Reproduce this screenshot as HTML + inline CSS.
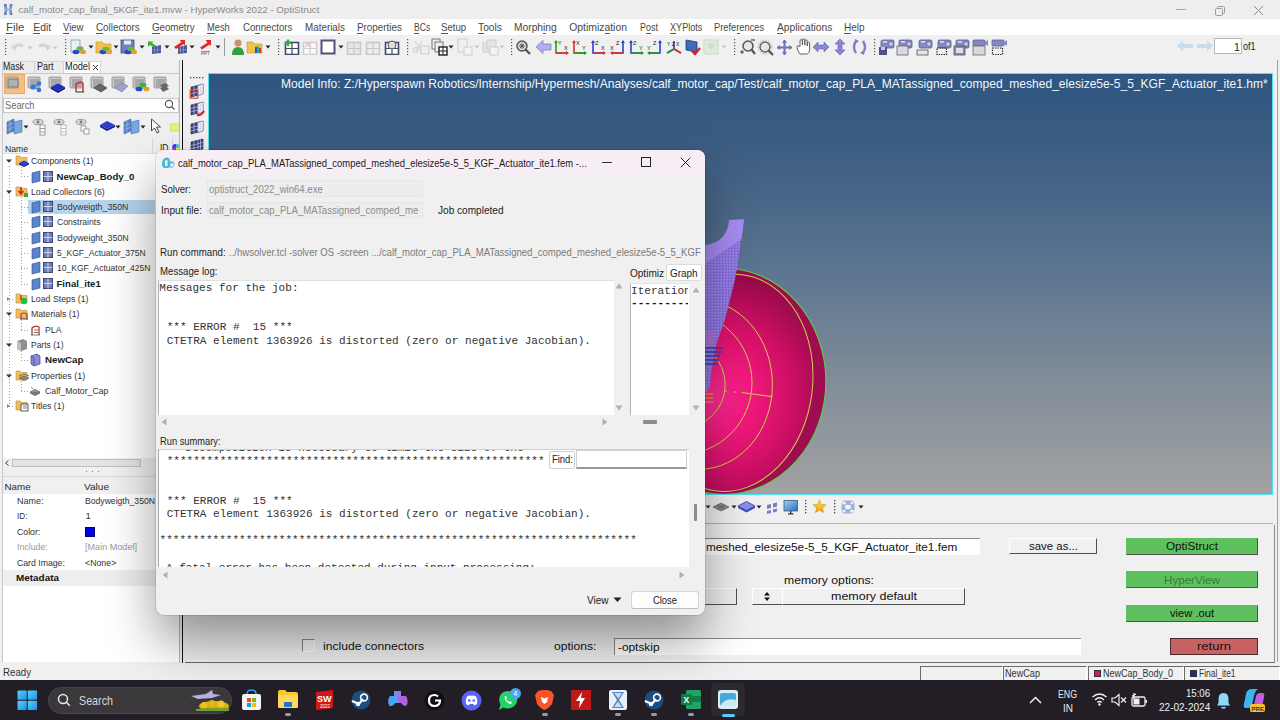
<!DOCTYPE html>
<html><head><meta charset="utf-8"><style>
html,body{margin:0;padding:0;width:1280px;height:720px;overflow:hidden;background:#f0f0f0;}
body>div,body>svg{position:absolute;box-sizing:border-box;}
.t{position:absolute;white-space:pre;line-height:20px;height:20px;}
</style></head><body>
<div style="left:0px;top:0px;width:1280px;height:19px;background:#eeeeee"></div>
<svg style="left:0px;top:0px;" width="16" height="19" viewBox="0 0 16 19"><defs><linearGradient id="hg" x1="0" y1="0" x2="0" y2="1"><stop offset="0" stop-color="#5a76a8"/><stop offset="0.5" stop-color="#8eb0e0"/><stop offset="1" stop-color="#5a76a8"/></linearGradient></defs><path d="M3.8 4 H6.6 Q7.2 9.2 8.2 9.2 Q9.2 9.2 9.8 4 H12.5 Q11.2 9.5 12.5 15 H9.8 Q9.2 9.9 8.2 9.9 Q7.2 9.9 6.6 15 H3.8 Q5.2 9.5 3.8 4 Z" fill="url(#hg)"/></svg>
<div class="t" style="left:18.50px;top:0.25px;font-size:9.68px;font-family:'Liberation Sans',sans-serif;font-weight:normal;color:#8a8a8a;">calf_motor_cap_final_5KGF_ite1.mvw - HyperWorks 2022 - OptiStruct</div>
<div style="left:1176px;top:9px;width:10px;height:1px;background:#a8a8a8"></div>
<svg style="left:1214px;top:5px;" width="12" height="12" viewBox="0 0 12 12"><rect x="1.5" y="3.5" width="7" height="7" rx="1" fill="none" stroke="#9a9a9a"/><path d="M3.5 3.5 V2.5 Q3.5 1.5 4.5 1.5 H9.5 Q10.5 1.5 10.5 2.5 V7.5 Q10.5 8.5 9.5 8.5 H8.5" fill="none" stroke="#9a9a9a"/></svg>
<svg style="left:1253px;top:5px;" width="11" height="11" viewBox="0 0 11 11"><path d="M1 1 L10 10 M10 1 L1 10" stroke="#8a8a8a" stroke-width="1"/></svg>
<div style="left:0px;top:19px;width:1280px;height:16px;background:#ffffff"></div>
<div class="t" style="left:6.20px;top:18.40px;font-size:10.40px;font-family:'Liberation Sans',sans-serif;font-weight:normal;color:#484848;transform:scaleX(1.1039);transform-origin:0 0;">File</div>
<div style="left:6.2px;top:33px;width:7.0px;height:1px;background:#555"></div>
<div class="t" style="left:33.30px;top:18.40px;font-size:10.40px;font-family:'Liberation Sans',sans-serif;font-weight:normal;color:#484848;">Edit</div>
<div style="left:33.3px;top:33px;width:7.0px;height:1px;background:#555"></div>
<div class="t" style="left:62.90px;top:18.40px;font-size:10.40px;font-family:'Liberation Sans',sans-serif;font-weight:normal;color:#484848;transform:scaleX(0.9170);transform-origin:0 0;">View</div>
<div style="left:62.9px;top:33px;width:6.4px;height:1px;background:#555"></div>
<div class="t" style="left:96.20px;top:18.40px;font-size:10.40px;font-family:'Liberation Sans',sans-serif;font-weight:normal;color:#484848;transform:scaleX(0.9473);transform-origin:0 0;">Collectors</div>
<div style="left:96.2px;top:33px;width:7.1px;height:1px;background:#555"></div>
<div class="t" style="left:152.30px;top:18.40px;font-size:10.40px;font-family:'Liberation Sans',sans-serif;font-weight:normal;color:#484848;transform:scaleX(0.9352);transform-origin:0 0;">Geometry</div>
<div style="left:152.3px;top:33px;width:7.6px;height:1px;background:#555"></div>
<div class="t" style="left:207.30px;top:18.40px;font-size:10.40px;font-family:'Liberation Sans',sans-serif;font-weight:normal;color:#484848;transform:scaleX(0.8926);transform-origin:0 0;">Mesh</div>
<div style="left:207.3px;top:33px;width:7.7px;height:1px;background:#555"></div>
<div class="t" style="left:242.70px;top:18.40px;font-size:10.40px;font-family:'Liberation Sans',sans-serif;font-weight:normal;color:#484848;transform:scaleX(0.9270);transform-origin:0 0;">Connectors</div>
<div style="left:255.0px;top:33px;width:5.4px;height:1px;background:#555"></div>
<div class="t" style="left:304.60px;top:18.40px;font-size:10.40px;font-family:'Liberation Sans',sans-serif;font-weight:normal;color:#484848;transform:scaleX(0.9481);transform-origin:0 0;">Materials</div>
<div style="left:337.5px;top:33px;width:2.2px;height:1px;background:#555"></div>
<div class="t" style="left:356.50px;top:18.40px;font-size:10.40px;font-family:'Liberation Sans',sans-serif;font-weight:normal;color:#484848;transform:scaleX(0.9493);transform-origin:0 0;">Properties</div>
<div style="left:356.5px;top:33px;width:6.6px;height:1px;background:#555"></div>
<div class="t" style="left:413.50px;top:18.40px;font-size:10.40px;font-family:'Liberation Sans',sans-serif;font-weight:normal;color:#484848;transform:scaleX(0.8245);transform-origin:0 0;">BCs</div>
<div style="left:413.5px;top:33px;width:5.7px;height:1px;background:#555"></div>
<div class="t" style="left:441.30px;top:18.40px;font-size:10.40px;font-family:'Liberation Sans',sans-serif;font-weight:normal;color:#484848;transform:scaleX(0.9235);transform-origin:0 0;">Setup</div>
<div style="left:441.3px;top:33px;width:6.4px;height:1px;background:#555"></div>
<div class="t" style="left:478.00px;top:18.40px;font-size:10.40px;font-family:'Liberation Sans',sans-serif;font-weight:normal;color:#484848;transform:scaleX(0.9885);transform-origin:0 0;">Tools</div>
<div style="left:478.0px;top:33px;width:6.3px;height:1px;background:#555"></div>
<div class="t" style="left:514.20px;top:18.40px;font-size:10.40px;font-family:'Liberation Sans',sans-serif;font-weight:normal;color:#484848;transform:scaleX(0.9871);transform-origin:0 0;">Morphing</div>
<div style="left:543.3px;top:33px;width:2.3px;height:1px;background:#555"></div>
<div class="t" style="left:569.20px;top:18.40px;font-size:10.40px;font-family:'Liberation Sans',sans-serif;font-weight:normal;color:#484848;">Optimization</div>
<div style="left:604.6px;top:33px;width:5.8px;height:1px;background:#555"></div>
<div class="t" style="left:639.70px;top:18.40px;font-size:10.40px;font-family:'Liberation Sans',sans-serif;font-weight:normal;color:#484848;transform:scaleX(0.8601);transform-origin:0 0;">Post</div>
<div style="left:645.7px;top:33px;width:5.0px;height:1px;background:#555"></div>
<div class="t" style="left:669.60px;top:18.40px;font-size:10.40px;font-family:'Liberation Sans',sans-serif;font-weight:normal;color:#484848;transform:scaleX(0.8758);transform-origin:0 0;">XYPlots</div>
<div style="left:669.6px;top:33px;width:6.1px;height:1px;background:#555"></div>
<div class="t" style="left:714.30px;top:18.40px;font-size:10.40px;font-family:'Liberation Sans',sans-serif;font-weight:normal;color:#484848;transform:scaleX(0.8952);transform-origin:0 0;">Preferences</div>
<div style="left:736.6px;top:33px;width:3.1px;height:1px;background:#555"></div>
<div class="t" style="left:776.50px;top:18.40px;font-size:10.40px;font-family:'Liberation Sans',sans-serif;font-weight:normal;color:#484848;transform:scaleX(0.9897);transform-origin:0 0;">Applications</div>
<div style="left:776.5px;top:33px;width:6.9px;height:1px;background:#555"></div>
<div class="t" style="left:844.20px;top:18.40px;font-size:10.40px;font-family:'Liberation Sans',sans-serif;font-weight:normal;color:#484848;transform:scaleX(0.9677);transform-origin:0 0;">Help</div>
<div style="left:844.2px;top:33px;width:7.3px;height:1px;background:#555"></div>
<svg style="left:3.5px;top:38px;" width="3" height="17" viewBox="0 0 3 17"><rect x="1" y="1" width="1.2" height="1.2" fill="#555"/><rect x="1" y="4" width="1.2" height="1.2" fill="#555"/><rect x="1" y="7" width="1.2" height="1.2" fill="#555"/><rect x="1" y="10" width="1.2" height="1.2" fill="#555"/><rect x="1" y="13" width="1.2" height="1.2" fill="#555"/><rect x="1" y="16" width="1.2" height="1.2" fill="#555"/></svg>
<svg style="left:64px;top:38px;" width="3" height="17" viewBox="0 0 3 17"><rect x="1" y="1" width="1.2" height="1.2" fill="#555"/><rect x="1" y="4" width="1.2" height="1.2" fill="#555"/><rect x="1" y="7" width="1.2" height="1.2" fill="#555"/><rect x="1" y="10" width="1.2" height="1.2" fill="#555"/><rect x="1" y="13" width="1.2" height="1.2" fill="#555"/><rect x="1" y="16" width="1.2" height="1.2" fill="#555"/></svg>
<svg style="left:277px;top:38px;" width="3" height="17" viewBox="0 0 3 17"><rect x="1" y="1" width="1.2" height="1.2" fill="#555"/><rect x="1" y="4" width="1.2" height="1.2" fill="#555"/><rect x="1" y="7" width="1.2" height="1.2" fill="#555"/><rect x="1" y="10" width="1.2" height="1.2" fill="#555"/><rect x="1" y="13" width="1.2" height="1.2" fill="#555"/><rect x="1" y="16" width="1.2" height="1.2" fill="#555"/></svg>
<svg style="left:405.5px;top:38px;" width="3" height="17" viewBox="0 0 3 17"><rect x="1" y="1" width="1.2" height="1.2" fill="#555"/><rect x="1" y="4" width="1.2" height="1.2" fill="#555"/><rect x="1" y="7" width="1.2" height="1.2" fill="#555"/><rect x="1" y="10" width="1.2" height="1.2" fill="#555"/><rect x="1" y="13" width="1.2" height="1.2" fill="#555"/><rect x="1" y="16" width="1.2" height="1.2" fill="#555"/></svg>
<svg style="left:510px;top:38px;" width="3" height="17" viewBox="0 0 3 17"><rect x="1" y="1" width="1.2" height="1.2" fill="#555"/><rect x="1" y="4" width="1.2" height="1.2" fill="#555"/><rect x="1" y="7" width="1.2" height="1.2" fill="#555"/><rect x="1" y="10" width="1.2" height="1.2" fill="#555"/><rect x="1" y="13" width="1.2" height="1.2" fill="#555"/><rect x="1" y="16" width="1.2" height="1.2" fill="#555"/></svg>
<svg style="left:732.5px;top:38px;" width="3" height="17" viewBox="0 0 3 17"><rect x="1" y="1" width="1.2" height="1.2" fill="#555"/><rect x="1" y="4" width="1.2" height="1.2" fill="#555"/><rect x="1" y="7" width="1.2" height="1.2" fill="#555"/><rect x="1" y="10" width="1.2" height="1.2" fill="#555"/><rect x="1" y="13" width="1.2" height="1.2" fill="#555"/><rect x="1" y="16" width="1.2" height="1.2" fill="#555"/></svg>
<svg style="left:872.8px;top:38px;" width="3" height="17" viewBox="0 0 3 17"><rect x="1" y="1" width="1.2" height="1.2" fill="#555"/><rect x="1" y="4" width="1.2" height="1.2" fill="#555"/><rect x="1" y="7" width="1.2" height="1.2" fill="#555"/><rect x="1" y="10" width="1.2" height="1.2" fill="#555"/><rect x="1" y="13" width="1.2" height="1.2" fill="#555"/><rect x="1" y="16" width="1.2" height="1.2" fill="#555"/></svg>
<div style="left:224px;top:38px;width:1px;height:18px;background:#9a9a9a"></div>
<svg style="left:10px;top:40px;" width="16" height="14" viewBox="0 0 16 14"><path d="M3 9 Q6 3 13 6" stroke="#d4d4d4" stroke-width="3" fill="none"/><path d="M1 6 L5 11 L7 5 Z" fill="#d4d4d4"/></svg>
<svg style="left:27px;top:46px;" width="6" height="4" viewBox="0 0 6 4"><path d="M0.5 0.5 H5.5 L3 3.5 Z" fill="#c8c8c8"/></svg>
<svg style="left:36px;top:40px;" width="16" height="14" viewBox="0 0 16 14"><path d="M13 9 Q10 3 3 6" stroke="#d4d4d4" stroke-width="3" fill="none"/><path d="M15 6 L11 11 L9 5 Z" fill="#d4d4d4"/></svg>
<svg style="left:52px;top:46px;" width="6" height="4" viewBox="0 0 6 4"><path d="M0.5 0.5 H5.5 L3 3.5 Z" fill="#c8c8c8"/></svg>
<svg style="left:69px;top:38px;" width="18" height="18" viewBox="0 0 18 18"><rect x="2" y="2" width="9" height="12" fill="#e8eef6" stroke="#8898a8" stroke-width="0.8"/><ellipse cx="7" cy="14" rx="3.5" ry="2.2" fill="#2a48c8"/><ellipse cx="11" cy="10.5" rx="3.5" ry="2.2" fill="#5fb84a"/><ellipse cx="14" cy="14" rx="3" ry="2.2" fill="#e0a030"/></svg>
<svg style="left:88px;top:45px;" width="6" height="4" viewBox="0 0 6 4"><path d="M0.5 0.5 H5.5 L3 3.5 Z" fill="#222"/></svg>
<svg style="left:95px;top:38px;" width="18" height="18" viewBox="0 0 18 18"><path d="M1 4 H7 L9 6 H16 V15 H1 Z" fill="#f0c050" stroke="#c89030" stroke-width="0.6"/><ellipse cx="8" cy="14" rx="3.5" ry="2.2" fill="#2a48c8"/><ellipse cx="11" cy="11" rx="3.5" ry="2.2" fill="#5fb84a"/><ellipse cx="14" cy="14" rx="3" ry="2.2" fill="#e0a030"/></svg>
<svg style="left:113px;top:45px;" width="6" height="4" viewBox="0 0 6 4"><path d="M0.5 0.5 H5.5 L3 3.5 Z" fill="#222"/></svg>
<svg style="left:120px;top:38px;" width="18" height="18" viewBox="0 0 18 18"><rect x="1" y="2" width="13" height="13" fill="#7080b8" stroke="#404880" stroke-width="0.8"/><rect x="4" y="2.5" width="7" height="4" fill="#e8e8f0"/><ellipse cx="8" cy="14" rx="3.5" ry="2.2" fill="#2a48c8"/><ellipse cx="11" cy="11" rx="3.5" ry="2.2" fill="#5fb84a"/><ellipse cx="14" cy="14" rx="3" ry="2.2" fill="#e0a030"/></svg>
<svg style="left:139px;top:45px;" width="6" height="4" viewBox="0 0 6 4"><path d="M0.5 0.5 H5.5 L3 3.5 Z" fill="#222"/></svg>
<svg style="left:145px;top:38px;" width="18" height="18" viewBox="0 0 18 18"><path d="M3 9 L3 3.5 L8.5 3.5 L7 5 L13 9 L11 11 L5 7 L3 9 Z" fill="#40b030" transform="translate(0 0)"/><path d="M7 9 L16 7 L16 15 L7 16 Z" fill="#4858a0"/><path d="M9.5 8.5 V16 M12.5 8 V15.5 M7 12 H16" stroke="#aab" stroke-width="0.6"/></svg>
<svg style="left:164px;top:45px;" width="6" height="4" viewBox="0 0 6 4"><path d="M0.5 0.5 H5.5 L3 3.5 Z" fill="#222"/></svg>
<svg style="left:171px;top:38px;" width="18" height="18" viewBox="0 0 18 18"><path d="M7 9 L16 7 L16 15 L7 16 Z" fill="#4858a0"/><path d="M9.5 8.5 V16 M12.5 8 V15.5 M7 12 H16" stroke="#aab" stroke-width="0.6"/><path d="M14 2 L14 7.5 L12.5 6 L5 11 L3 9 L10.5 4 L8.5 2 Z" fill="#e02828"/></svg>
<svg style="left:189px;top:45px;" width="6" height="4" viewBox="0 0 6 4"><path d="M0.5 0.5 H5.5 L3 3.5 Z" fill="#222"/></svg>
<svg style="left:196px;top:38px;" width="18" height="18" viewBox="0 0 18 18"><path d="M15 2 L15 8 L13.5 6.5 L6 11.5 L4 9.5 L11.5 4.5 L9.5 2 Z" fill="#e02828"/><text x="5" y="16.5" font-size="4.5" fill="#333" font-family="Liberation Sans">PPT</text></svg>
<svg style="left:215px;top:45px;" width="6" height="4" viewBox="0 0 6 4"><path d="M0.5 0.5 H5.5 L3 3.5 Z" fill="#222"/></svg>
<svg style="left:230px;top:38px;" width="16" height="18" viewBox="0 0 16 18"><circle cx="8" cy="5" r="3.5" fill="#d09060"/><path d="M2 17 Q2 9 8 9 Q14 9 14 17 Z" fill="#30a040"/></svg>
<svg style="left:246px;top:38px;" width="18" height="18" viewBox="0 0 18 18"><path d="M1 4 H7 L9 6 H16 V15 H1 Z" fill="#f0c050" stroke="#c89030" stroke-width="0.6"/><rect x="9" y="9" width="2" height="6" fill="#2050e0"/><rect x="11" y="8" width="2" height="7" fill="#30c040"/><rect x="13" y="10" width="2" height="5" fill="#e03030"/></svg>
<svg style="left:265px;top:45px;" width="6" height="4" viewBox="0 0 6 4"><path d="M0.5 0.5 H5.5 L3 3.5 Z" fill="#222"/></svg>
<svg style="left:283.7px;top:39px;" width="16" height="16" viewBox="0 0 16 16"><g opacity="1.0"><rect x="1.5" y="3.5" width="13" height="12" fill="#fff" stroke="#404868" stroke-width="1.6"/><path d="M8 3.5 V15.5 M1.5 9.5 H14.5" stroke="#404868" stroke-width="1.2"/><path d="M4 0.5 V7 M0.8 3.8 H7.2" stroke="#30b030" stroke-width="2.4"/></g></svg>
<svg style="left:302px;top:39px;" width="16" height="16" viewBox="0 0 16 16"><g opacity="0.7"><rect x="1.5" y="3.5" width="13" height="12" fill="#fff" stroke="#c0c0c0" stroke-width="1.6"/><path d="M8 3.5 V15.5 M1.5 9.5 H14.5" stroke="#c0c0c0" stroke-width="1.2"/><path d="M3 3 L9 8 M9 3 L3 8" stroke="#e8b0b0" stroke-width="1.5"/></g></svg>
<svg style="left:320px;top:39px;" width="16" height="16" viewBox="0 0 16 16"><rect x="1.5" y="1.5" width="13" height="13" fill="#fff" stroke="#50507a" stroke-width="2"/></svg>
<svg style="left:338px;top:45px;" width="6" height="4" viewBox="0 0 6 4"><path d="M0.5 0.5 H5.5 L3 3.5 Z" fill="#222"/></svg>
<svg style="left:346px;top:39px;" width="16" height="16" viewBox="0 0 16 16"><g opacity="1.0"><rect x="1.5" y="3.5" width="13" height="12" fill="#e8e8e8" stroke="#c8c8c8" stroke-width="1.6"/><path d="M8 3.5 V15.5 M1.5 9.5 H14.5" stroke="#c8c8c8" stroke-width="1.2"/></g></svg>
<svg style="left:365px;top:39px;" width="16" height="16" viewBox="0 0 16 16"><g opacity="1.0"><rect x="1.5" y="3.5" width="13" height="12" fill="#ececec" stroke="#c8c8c8" stroke-width="1.6"/><path d="M8 3.5 V15.5 M1.5 9.5 H14.5" stroke="#c8c8c8" stroke-width="1.2"/></g></svg>
<svg style="left:384px;top:39px;" width="16" height="16" viewBox="0 0 16 16"><g opacity="1.0"><rect x="1.5" y="3.5" width="13" height="12" fill="#fff" stroke="#404868" stroke-width="1.6"/><path d="M8 3.5 V15.5 M1.5 9.5 H14.5" stroke="#404868" stroke-width="1.2"/><circle cx="8" cy="6" r="4" fill="#ddd" stroke="#555" stroke-width="1"/></g></svg>
<svg style="left:412px;top:39px;" width="18" height="16" viewBox="0 0 18 16"><circle cx="4" cy="11" r="2.5" fill="none" stroke="#ccc"/><path d="M3 2 L10 12 M10 2 L4 12" stroke="#ccc"/><rect x="9" y="7" width="8" height="8" fill="#eee" stroke="#ccc"/></svg>
<svg style="left:431px;top:38px;" width="18" height="18" viewBox="0 0 18 18"><rect x="1" y="1" width="8" height="10" fill="#eee" stroke="#777"/><rect x="4" y="4" width="8" height="10" fill="#eee" stroke="#777"/><rect x="8" y="9" width="8" height="8" fill="#fff" stroke="#222" stroke-width="1.4"/><path d="M12 9 V17 M8 13 H16" stroke="#222"/></svg>
<svg style="left:448px;top:45px;" width="6" height="4" viewBox="0 0 6 4"><path d="M0.5 0.5 H5.5 L3 3.5 Z" fill="#222"/></svg>
<svg style="left:456px;top:38px;" width="18" height="18" viewBox="0 0 18 18"><rect x="2" y="1" width="9" height="13" fill="#f0f0f0" stroke="#ccc"/><rect x="8" y="9" width="8" height="8" fill="#f4f4f4" stroke="#ccc"/></svg>
<svg style="left:473.6px;top:45px;" width="6" height="4" viewBox="0 0 6 4"><path d="M0.5 0.5 H5.5 L3 3.5 Z" fill="#c8c8c8"/></svg>
<svg style="left:482px;top:38px;" width="18" height="18" viewBox="0 0 18 18"><rect x="1" y="5" width="9" height="9" fill="#e4e4e4" stroke="#ccc"/><rect x="5" y="2" width="9" height="9" fill="#e4e4e4" stroke="#ccc"/><rect x="8" y="9" width="8" height="8" fill="#f4f4f4" stroke="#ccc"/></svg>
<svg style="left:499px;top:45px;" width="6" height="4" viewBox="0 0 6 4"><path d="M0.5 0.5 H5.5 L3 3.5 Z" fill="#c8c8c8"/></svg>
<svg style="left:515px;top:39px;" width="16" height="16" viewBox="0 0 16 16"><circle cx="7" cy="7" r="5" fill="#d8d8e0" stroke="#555" stroke-width="1.5"/><path d="M10.5 10.5 L15 15" stroke="#555" stroke-width="2.4"/><path d="M5 5 L9 9 M9 5 L5 9 M7 4 V10 M4 7 H10" stroke="#444" stroke-width="0.8"/></svg>
<svg style="left:535px;top:39px;" width="18" height="16" viewBox="0 0 18 16"><path d="M1 8 L8 1.5 V5 H16 V11 H8 V14.5 Z" fill="#b0b0ec" stroke="#8080c8" stroke-width="0.8"/></svg>
<svg style="left:553px;top:39px;" width="18" height="17" viewBox="0 0 18 17"><path d="M3 2 V14 H15" stroke="#20a020" stroke-width="1.6" fill="none"/><path d="M3 14 H15" stroke="#e03030" stroke-width="1.6"/><path d="M1 4 L3 1 L5 4 Z" fill="#20a020"/><path d="M13 12 L16 14 L13 16 Z" fill="#e03030"/><text x="5" y="6" font-size="5.5" font-family="Liberation Sans" fill="#222">Y</text><text x="11" y="11" font-size="5.5" font-family="Liberation Sans" fill="#222">X</text></svg>
<svg style="left:571px;top:39px;" width="18" height="17" viewBox="0 0 18 17"><path d="M3 2 V14 H15" stroke="#e03030" stroke-width="1.6" fill="none"/><path d="M3 14 H15" stroke="#20a020" stroke-width="1.6"/><path d="M1 4 L3 1 L5 4 Z" fill="#e03030"/><path d="M13 12 L16 14 L13 16 Z" fill="#20a020"/><text x="5" y="6" font-size="5.5" font-family="Liberation Sans" fill="#222">X</text><text x="11" y="11" font-size="5.5" font-family="Liberation Sans" fill="#222">Y</text></svg>
<svg style="left:590px;top:39px;" width="18" height="17" viewBox="0 0 18 17"><path d="M3 2 V14 H15" stroke="#3040d0" stroke-width="1.6" fill="none"/><path d="M3 14 H15" stroke="#e03030" stroke-width="1.6"/><path d="M1 4 L3 1 L5 4 Z" fill="#3040d0"/><path d="M13 12 L16 14 L13 16 Z" fill="#e03030"/><text x="5" y="6" font-size="5.5" font-family="Liberation Sans" fill="#222">Z</text><text x="11" y="11" font-size="5.5" font-family="Liberation Sans" fill="#222">X</text></svg>
<svg style="left:609px;top:39px;" width="18" height="17" viewBox="0 0 18 17"><path d="M14 2 V14 H2" stroke="#3040d0" stroke-width="1.6" fill="none"/><path d="M2 14 H14" stroke="#e03030" stroke-width="1.6"/><path d="M12 4 L14 1 L16 4 Z" fill="#3040d0"/><path d="M4 12 L1 14 L4 16 Z" fill="#e03030"/><text x="7" y="6" font-size="5.5" font-family="Liberation Sans" fill="#222">Z</text><text x="1" y="11" font-size="5.5" font-family="Liberation Sans" fill="#222">X</text></svg>
<svg style="left:627.6px;top:39px;" width="18" height="17" viewBox="0 0 18 17"><path d="M3 2 V14 H15" stroke="#3040d0" stroke-width="1.6" fill="none"/><path d="M3 14 H15" stroke="#20a020" stroke-width="1.6"/><path d="M1 4 L3 1 L5 4 Z" fill="#3040d0"/><path d="M13 12 L16 14 L13 16 Z" fill="#20a020"/><text x="5" y="6" font-size="5.5" font-family="Liberation Sans" fill="#222">Z</text><text x="11" y="11" font-size="5.5" font-family="Liberation Sans" fill="#222">Y</text></svg>
<svg style="left:646px;top:39px;" width="18" height="17" viewBox="0 0 18 17"><path d="M14 2 V14 H2" stroke="#3040d0" stroke-width="1.6" fill="none"/><path d="M2 14 H14" stroke="#20a020" stroke-width="1.6"/><path d="M12 4 L14 1 L16 4 Z" fill="#3040d0"/><path d="M4 12 L1 14 L4 16 Z" fill="#20a020"/><text x="7" y="6" font-size="5.5" font-family="Liberation Sans" fill="#222">Z</text><text x="1" y="11" font-size="5.5" font-family="Liberation Sans" fill="#222">Y</text></svg>
<svg style="left:665px;top:39px;" width="18" height="17" viewBox="0 0 18 17"><path d="M9 2 V10 M9 10 L2 14 M9 10 L16 14" stroke="#3040d0" stroke-width="1.6"/><path d="M9 10 L16 14" stroke="#e03030" stroke-width="1.6"/><path d="M9 10 L2 14" stroke="#20a020" stroke-width="1.6"/><text x="2" y="7" font-size="5" fill="#222" font-family="Liberation Sans">Y Z X</text></svg>
<svg style="left:684px;top:38px;" width="17" height="18" viewBox="0 0 17 18"><path d="M2 2 L13 4 V14 L2 12 Z" fill="#3e6cc0" stroke="#203870" stroke-width="0.8"/><path d="M8 13 L11 16 L16 10" stroke="#e02020" stroke-width="2.2" fill="none"/></svg>
<svg style="left:703px;top:38px;opacity:0.8" width="16" height="18" viewBox="0 0 16 18"><rect x="1" y="2" width="14" height="14" fill="#dde8dd" stroke="#c8d0c8"/><circle cx="8" cy="8" r="3" fill="#c8d8c8"/></svg>
<svg style="left:721px;top:45px;" width="6" height="4" viewBox="0 0 6 4"><path d="M0.5 0.5 H5.5 L3 3.5 Z" fill="#c8c8c8"/></svg>
<svg style="left:739px;top:39px;" width="18" height="17" viewBox="0 0 18 17"><circle cx="9" cy="7" r="5" fill="#e4e4ec" stroke="#555" stroke-width="1.5"/><path d="M12.5 10.5 L16 15" stroke="#555" stroke-width="2.2"/><path d="M12 1 H16" stroke="#444" stroke-width="1.2"/><path d="M1 13 H5 M3 11 V15" stroke="#444" stroke-width="1"/></svg>
<svg style="left:757px;top:39px;" width="18" height="17" viewBox="0 0 18 17"><circle cx="8" cy="8" r="5" fill="#e4e4ec" stroke="#666" stroke-width="1.5"/><circle cx="8" cy="8" r="7" fill="none" stroke="#999" stroke-width="0.8" stroke-dasharray="1.5 1.5"/><path d="M11.5 11.5 L16 16" stroke="#555" stroke-width="2.2"/></svg>
<svg style="left:776px;top:39px;" width="17" height="17" viewBox="0 0 17 17"><path d="M8.5 1 V16 M1 8.5 H16" stroke="#7070b0" stroke-width="2"/><path d="M8.5 1 L6 4 H11 Z M8.5 16 L6 13 H11 Z M1 8.5 L4 6 V11 Z M16 8.5 L13 6 V11 Z" fill="#7070b0"/></svg>
<svg style="left:795px;top:38px;" width="17" height="18" viewBox="0 0 17 18"><path d="M5 16 Q2 12 2 9 Q2 7 4 8 L5 9 V3 Q5 1.5 6.2 1.5 Q7.4 1.5 7.4 3 V7 V2 Q7.4 0.8 8.6 0.8 Q9.8 0.8 9.8 2 V7 V3 Q9.8 1.8 11 1.8 Q12.2 1.8 12.2 3 V8 V5 Q12.2 4 13.4 4 Q14.6 4 14.6 5 V11 Q14.6 16 11 16 Z" fill="#fff" stroke="#555" stroke-width="0.9"/></svg>
<svg style="left:812px;top:40px;" width="18" height="14" viewBox="0 0 18 14"><path d="M1 7 L6 2 V5 H12 V2 L17 7 L12 12 V9 H6 V12 Z" fill="#8888d0" stroke="#6060b0" stroke-width="0.6"/></svg>
<svg style="left:833px;top:38px;" width="14" height="18" viewBox="0 0 14 18"><path d="M7 1 L12 6 H9 V12 H12 L7 17 L2 12 H5 V6 H2 Z" fill="#8888d0" stroke="#6060b0" stroke-width="0.6"/></svg>
<svg style="left:851px;top:38px;" width="17" height="18" viewBox="0 0 17 18"><path d="M5 3 Q1 9 5 15" stroke="#8080c8" stroke-width="2.4" fill="none"/><path d="M12 3 Q16 9 12 15" stroke="#8080c8" stroke-width="2.4" fill="none"/><path d="M4 1 L8 3 L4 6 Z M13 12 L9 15 L13 17 Z" fill="#8080c8"/></svg>
<svg style="left:878px;top:38px;" width="18" height="18" viewBox="0 0 18 18"><rect x="3" y="2" width="13" height="8" rx="1.5" fill="#8888c0" stroke="#5a5a98" stroke-width="0.8"/><circle cx="13" cy="6" r="2.3" fill="#ccd" stroke="#55a" stroke-width="0.6"/><rect x="5" y="3" width="4" height="1.6" fill="#dde"/><rect x="1" y="9" width="8" height="8" fill="#50508a"/><rect x="3" y="9" width="4" height="3" fill="#ccd"/></svg>
<svg style="left:896px;top:38px;" width="18" height="18" viewBox="0 0 18 18"><rect x="3" y="2" width="13" height="8" rx="1.5" fill="#8888c0" stroke="#5a5a98" stroke-width="0.8"/><circle cx="13" cy="6" r="2.3" fill="#ccd" stroke="#55a" stroke-width="0.6"/><rect x="5" y="3" width="4" height="1.6" fill="#dde"/><rect x="1" y="8" width="11" height="9" fill="#d8d8e0" stroke="#666" stroke-width="0.8"/></svg>
<svg style="left:915.6px;top:38px;" width="18" height="18" viewBox="0 0 18 18"><rect x="3" y="2" width="13" height="8" rx="1.5" fill="#8888c0" stroke="#5a5a98" stroke-width="0.8"/><circle cx="13" cy="6" r="2.3" fill="#ccd" stroke="#55a" stroke-width="0.6"/><rect x="5" y="3" width="4" height="1.6" fill="#dde"/><rect x="1" y="12" width="11" height="5" fill="#e4e4e8" stroke="#555" stroke-width="0.8"/></svg>
<svg style="left:935px;top:38px;" width="18" height="18" viewBox="0 0 18 18"><rect x="3" y="2" width="13" height="8" rx="1.5" fill="#8888c0" stroke="#5a5a98" stroke-width="0.8"/><circle cx="13" cy="6" r="2.3" fill="#ccd" stroke="#55a" stroke-width="0.6"/><rect x="5" y="3" width="4" height="1.6" fill="#dde"/><rect x="2" y="10" width="9.5" height="6.5" fill="none" stroke="#111" stroke-width="1.2" stroke-dasharray="1.3 1.2"/></svg>
<svg style="left:953px;top:38px;" width="18" height="18" viewBox="0 0 18 18"><rect x="3" y="2" width="13" height="8" rx="1.5" fill="#8888c0" stroke="#5a5a98" stroke-width="0.8"/><circle cx="13" cy="6" r="2.3" fill="#ccd" stroke="#55a" stroke-width="0.6"/><rect x="5" y="3" width="4" height="1.6" fill="#dde"/><rect x="1" y="8" width="11" height="9" fill="#8a8aa8" stroke="#555" stroke-width="0.8"/><rect x="3" y="10" width="7" height="5" fill="#dde"/></svg>
<svg style="left:971px;top:38px;" width="18" height="18" viewBox="0 0 18 18"><rect x="2" y="2" width="12" height="6" rx="1" fill="#8888c0" stroke="#5a5a98" stroke-width="0.8"/><path d="M14 4 L17 2 V8 L14 6 Z" fill="#8888c0"/><rect x="2" y="8" width="12" height="9" fill="#d8d8e0" stroke="#666" stroke-width="0.8"/></svg>
<svg style="left:990px;top:38px;" width="18" height="18" viewBox="0 0 18 18"><rect x="2" y="2" width="12" height="6" rx="1" fill="#8888c0" stroke="#5a5a98" stroke-width="0.8"/><path d="M14 4 L17 2 V8 L14 6 Z" fill="#8888c0"/><rect x="2.5" y="10" width="10" height="6.5" fill="none" stroke="#111" stroke-width="1.2" stroke-dasharray="1.3 1.2"/></svg>
<svg style="left:1176px;top:39px;" width="18" height="14" viewBox="0 0 18 14"><path d="M1 7 L7 1.5 V5 H17 V9 H7 V12.5 Z" fill="#c8dcec"/></svg>
<svg style="left:1196px;top:39px;" width="18" height="14" viewBox="0 0 18 14"><path d="M17 7 L11 1.5 V5 H1 V9 H11 V12.5 Z" fill="#c8dcec"/></svg>
<div style="left:1214px;top:38px;width:28px;height:16px;background:#fff;border:1px solid #b8b8b8"></div>
<div class="t" style="left:1234.00px;top:36.86px;font-size:10.50px;font-family:'Liberation Sans',sans-serif;font-weight:normal;color:#222;">1</div>
<div class="t" style="left:1243.00px;top:37.03px;font-size:10.00px;font-family:'Liberation Sans',sans-serif;font-weight:normal;color:#222;transform:scaleX(0.8992);transform-origin:0 0;">of1</div>
<div style="left:1277px;top:60px;width:1px;height:602px;background:#a0a0a0"></div>
<div class="t" style="left:2.50px;top:663.03px;font-size:10.00px;font-family:'Liberation Sans',sans-serif;font-weight:normal;color:#333;transform:scaleX(0.9686);transform-origin:0 0;">Ready</div>
<div style="left:920px;top:666px;width:83px;height:14px;border-top:1px solid #6a6a6a;border-left:1px solid #6a6a6a;border-right:1px solid #ffffff;background:#f0f0f0"></div>
<div style="left:1003px;top:666px;width:84px;height:14px;border-top:1px solid #6a6a6a;border-left:1px solid #6a6a6a;border-right:1px solid #ffffff;background:#f0f0f0"></div>
<div class="t" style="left:1005.00px;top:663.53px;font-size:10.00px;font-family:'Liberation Sans',sans-serif;font-weight:normal;color:#333;transform:scaleX(0.9126);transform-origin:0 0;">NewCap</div>
<div style="left:1088px;top:666px;width:96px;height:14px;border-top:1px solid #6a6a6a;border-left:1px solid #6a6a6a;border-right:1px solid #ffffff;background:#f0f0f0"></div>
<div style="left:1094px;top:670px;width:7px;height:7px;background:#e0107a;border:1px solid #333"></div>
<div class="t" style="left:1102.50px;top:663.53px;font-size:10.00px;font-family:'Liberation Sans',sans-serif;font-weight:normal;color:#333;transform:scaleX(0.8994);transform-origin:0 0;">NewCap_Body_0</div>
<div style="left:1184px;top:666px;width:96px;height:14px;border-top:1px solid #6a6a6a;border-left:1px solid #6a6a6a;border-right:1px solid #ffffff;background:#f0f0f0"></div>
<div style="left:1190px;top:670px;width:7px;height:7px;background:#1a2e80;border:1px solid #333"></div>
<div class="t" style="left:1198.50px;top:663.53px;font-size:10.00px;font-family:'Liberation Sans',sans-serif;font-weight:normal;color:#333;transform:scaleX(0.8418);transform-origin:0 0;">Final_ite1</div>
<div style="left:2px;top:61px;width:33px;height:12px;background:#ececec;border:1px solid #d4d4d4;border-bottom:none"></div>
<div style="left:35px;top:61px;width:29px;height:12px;background:#ececec;border:1px solid #d4d4d4;border-bottom:none;border-left:none"></div>
<div style="left:64px;top:61px;width:37px;height:13px;background:#ffffff;border:1px solid #d4d4d4;border-bottom:none;border-left:none"></div>
<div class="t" style="left:3.00px;top:56.97px;font-size:10.20px;font-family:'Liberation Sans',sans-serif;font-weight:normal;color:#222;transform:scaleX(0.8617);transform-origin:0 0;">Mask</div>
<div class="t" style="left:37.00px;top:56.97px;font-size:10.20px;font-family:'Liberation Sans',sans-serif;font-weight:normal;color:#222;transform:scaleX(0.8820);transform-origin:0 0;">Part</div>
<div class="t" style="left:65.00px;top:56.97px;font-size:10.20px;font-family:'Liberation Sans',sans-serif;font-weight:normal;color:#222;transform:scaleX(0.8999);transform-origin:0 0;">Model</div>
<svg style="left:92px;top:64px;" width="7" height="7" viewBox="0 0 7 7"><path d="M1 1 L6 6 M6 1 L1 6" stroke="#333" stroke-width="1"/></svg>
<div style="left:2px;top:73px;width:178px;height:589px;background:#f0f0f0;border:1px solid #c8c8c8"></div>
<div style="left:3.5px;top:74px;width:21px;height:20px;background:#f7be80;border:1px solid #f0a860"></div>
<svg style="left:4px;top:74px;" width="20" height="20" viewBox="0 0 20 20"><rect x="2" y="3" width="12" height="11" rx="1" fill="#c8c8c8" stroke="#8a8a8a" stroke-width="0.8"/><rect x="4" y="5" width="9" height="8" fill="#a8a8a8"/><rect x="4" y="5" width="10" height="8" fill="#b0b0b0" stroke="#555" stroke-width="0.6"/></svg>
<svg style="left:26px;top:74px;" width="20" height="20" viewBox="0 0 20 20"><rect x="2" y="3" width="12" height="11" rx="1" fill="#c8c8c8" stroke="#8a8a8a" stroke-width="0.8"/><rect x="4" y="5" width="9" height="8" fill="#a8a8a8"/><circle cx="7" cy="13" r="2.6" fill="#2f7ad8"/><circle cx="13" cy="9.5" r="2.3" fill="#2f7ad8"/><circle cx="13" cy="16" r="2.3" fill="#2f7ad8"/><path d="M7 13 L13 9.5 M7 13 L13 16" stroke="#2f7ad8"/></svg>
<svg style="left:47px;top:74px;" width="20" height="20" viewBox="0 0 20 20"><rect x="2" y="3" width="12" height="11" rx="1" fill="#c8c8c8" stroke="#8a8a8a" stroke-width="0.8"/><rect x="4" y="5" width="9" height="8" fill="#a8a8a8"/><path d="M4 13 L11 9.5 L18 13 L11 17 Z" fill="#2030c0"/><path d="M4 13 V15 L11 19 L18 15 V13 L11 17 Z" fill="#101880"/></svg>
<svg style="left:68px;top:74px;" width="20" height="20" viewBox="0 0 20 20"><rect x="2" y="3" width="12" height="11" rx="1" fill="#c8c8c8" stroke="#8a8a8a" stroke-width="0.8"/><rect x="4" y="5" width="9" height="8" fill="#a8a8a8"/><path d="M8 18 V10 Q12 7 15 9 V18" stroke="#c03030" stroke-width="1.4" fill="none"/><path d="M8 18 H16" stroke="#333"/></svg>
<svg style="left:89px;top:74px;" width="20" height="20" viewBox="0 0 20 20"><rect x="2" y="3" width="12" height="11" rx="1" fill="#c8c8c8" stroke="#8a8a8a" stroke-width="0.8"/><rect x="4" y="5" width="9" height="8" fill="#a8a8a8"/><path d="M5 14 L11 10 L18 14 L12 18 Z" fill="#666" stroke="#333" stroke-width="0.6"/></svg>
<svg style="left:110px;top:74px;" width="20" height="20" viewBox="0 0 20 20"><rect x="2" y="3" width="12" height="11" rx="1" fill="#c8c8c8" stroke="#8a8a8a" stroke-width="0.8"/><rect x="4" y="5" width="9" height="8" fill="#a8a8a8"/><path d="M5 14 L12 9 L18 12 L12 18 Z" fill="#a0a0d8" stroke="#7070b0" stroke-width="0.6"/></svg>
<svg style="left:131px;top:74px;" width="20" height="20" viewBox="0 0 20 20"><rect x="2" y="3" width="12" height="11" rx="1" fill="#c8c8c8" stroke="#8a8a8a" stroke-width="0.8"/><rect x="4" y="5" width="9" height="8" fill="#a8a8a8"/><ellipse cx="8" cy="15" rx="3.5" ry="2.3" fill="#2a48c8"/><ellipse cx="12" cy="11" rx="3.5" ry="2.3" fill="#38b838"/><ellipse cx="15.5" cy="15" rx="3" ry="2.3" fill="#e0a030"/></svg>
<svg style="left:152px;top:74px;" width="20" height="20" viewBox="0 0 20 20"><rect x="2" y="3" width="12" height="11" rx="1" fill="#c8c8c8" stroke="#8a8a8a" stroke-width="0.8"/><rect x="4" y="5" width="9" height="8" fill="#a8a8a8"/><path d="M8 11 L14 9 L17 12 L11 14 Z M8 14 L14 12 L17 15 L11 18 Z" fill="#666"/></svg>
<div style="left:2.5px;top:97.5px;width:176px;height:15.5px;background:#ffffff;border:1px solid #c8c8c8"></div>
<div class="t" style="left:5.00px;top:96.23px;font-size:10.30px;font-family:'Liberation Sans',sans-serif;font-weight:normal;color:#6a6a6a;transform:scaleX(0.9039);transform-origin:0 0;">Search</div>
<svg style="left:164px;top:99px;" width="12" height="12" viewBox="0 0 12 12"><circle cx="5" cy="5" r="3.6" fill="none" stroke="#555" stroke-width="1.1"/><path d="M7.6 7.6 L10.5 10.5" stroke="#555" stroke-width="1.3"/></svg>
<svg style="left:5px;top:118px;" width="20" height="18" viewBox="0 0 20 18"><path d="M2 4 L9 1 V13 L2 16 Z" fill="#5a84cc" stroke="#33589a" stroke-width="0.5"/><path d="M9 4 L17 2 V14 L9 16 Z" fill="#7aa6e0" stroke="#33589a" stroke-width="0.5"/><path d="M2 8 L9 5 M2 12 L9 9 M5 2.5 V14.5" stroke="#bcd" stroke-width="0.5"/></svg>
<svg style="left:22.5px;top:125px;" width="6" height="4" viewBox="0 0 6 4"><path d="M0.5 0.5 H5.5 L3 3.5 Z" fill="#222"/></svg>
<svg style="left:32px;top:118px;" width="18" height="18" viewBox="0 0 18 18"><ellipse cx="6" cy="4" rx="5" ry="2.6" fill="#d8d8d8" stroke="#888" stroke-width="0.8"/><circle cx="6" cy="4" r="1.4" fill="#777"/><rect x="8" y="7" width="5" height="10" fill="#fff" stroke="#888" stroke-width="0.8"/><path d="M8 10.5 H13 M8 14 H13" stroke="#888" stroke-width="0.8"/></svg>
<svg style="left:53px;top:118px;" width="18" height="18" viewBox="0 0 18 18"><ellipse cx="6" cy="4" rx="5" ry="2.6" fill="#d8d8d8" stroke="#888" stroke-width="0.8"/><circle cx="6" cy="4" r="1.4" fill="#777"/><rect x="8" y="7" width="5" height="10" fill="#fff" stroke="#aaa" stroke-width="0.8"/><path d="M8 10.5 H13 M8 14 H13" stroke="#aaa" stroke-width="0.8"/></svg>
<svg style="left:75px;top:118px;" width="18" height="18" viewBox="0 0 18 18"><ellipse cx="6" cy="4" rx="5" ry="2.6" fill="#d8d8d8" stroke="#888" stroke-width="0.8"/><circle cx="6" cy="4" r="1.4" fill="#777"/><rect x="6" y="8" width="5" height="5" fill="#fff" stroke="#888" stroke-width="0.8"/><rect x="9" y="11" width="5" height="5" fill="#fff" stroke="#888" stroke-width="0.8"/></svg>
<svg style="left:99px;top:119px;" width="18" height="14" viewBox="0 0 18 14"><path d="M1 6 L8 2 L16 6 L8 10 Z" fill="#2a40d0"/><path d="M1 6 V8 L8 12 L16 8 V6 L8 10 Z" fill="#101c90"/></svg>
<svg style="left:115px;top:125px;" width="6" height="4" viewBox="0 0 6 4"><path d="M0.5 0.5 H5.5 L3 3.5 Z" fill="#222"/></svg>
<svg style="left:122px;top:118px;" width="20" height="18" viewBox="0 0 20 18"><path d="M2 4 L9 1 V13 L2 16 Z" fill="#5a84cc" stroke="#33589a" stroke-width="0.5"/><path d="M9 4 L17 2 V14 L9 16 Z" fill="#7aa6e0" stroke="#33589a" stroke-width="0.5"/><path d="M2 8 L9 5 M2 12 L9 9 M5 2.5 V14.5" stroke="#bcd" stroke-width="0.5"/></svg>
<svg style="left:139.5px;top:125px;" width="6" height="4" viewBox="0 0 6 4"><path d="M0.5 0.5 H5.5 L3 3.5 Z" fill="#222"/></svg>
<svg style="left:150px;top:118px;" width="12" height="16" viewBox="0 0 12 16"><path d="M1.5 1 V13 L4.5 10 L7 15 L9 14 L6.5 9 H10.5 Z" fill="#fff" stroke="#333" stroke-width="0.9"/></svg>
<svg style="left:170px;top:120px;" width="9" height="14" viewBox="0 0 9 14"><rect x="0" y="4" width="9" height="7" fill="#e8f080" stroke="#c8d050" stroke-width="0.6"/></svg>
<div style="left:3px;top:138px;width:176px;height:16px;background:#f0f0f0;border-bottom:1px solid #e0e0e0"></div>
<div style="left:152px;top:138px;width:1px;height:16px;background:#d8d8d8"></div>
<div style="left:172px;top:138px;width:1px;height:16px;background:#d8d8d8"></div>
<div class="t" style="left:4.50px;top:138.90px;font-size:9.80px;font-family:'Liberation Sans',sans-serif;font-weight:normal;color:#2a2a2a;transform:scaleX(0.8798);transform-origin:0 0;">Name</div>
<div class="t" style="left:159.50px;top:138.70px;font-size:10.40px;font-family:'Liberation Sans',sans-serif;font-weight:normal;color:#222;transform:scaleX(0.8173);transform-origin:0 0;">ID</div>
<svg style="left:171px;top:142px;" width="9" height="11" viewBox="0 0 9 11"><circle cx="4.8" cy="5.5" r="3.4" fill="#ff2020"/><path d="M4.8 5.5 L4.8 2 A3.5 3.5 0 0 1 8.3 5.5 Z" fill="#20d0ff"/><path d="M4.8 5.5 L8.3 5.5 A3.5 3.5 0 0 1 4.8 9 Z" fill="#ffe020"/><path d="M4.8 5.5 L4.8 9 A3.5 3.5 0 0 1 1.3 5.5 Z" fill="#b020ff"/><path d="M4.8 5.5 L1.3 5.5 A3.5 3.5 0 0 1 4.8 2 Z" fill="#2040ff"/></svg>
<div style="left:3px;top:154px;width:176px;height:304px;background:#ffffff"></div>
<svg style="left:9px;top:166px;" width="1" height="240" viewBox="0 0 1 240"><line x1="0.5" y1="0" x2="0.5" y2="240" stroke="#a0a0a0" stroke-width="1" stroke-dasharray="1 2"/></svg>
<svg style="left:9px;top:299px;" width="6" height="1" viewBox="0 0 6 1"><line x1="0" y1="0.5" x2="6" y2="0.5" stroke="#a0a0a0" stroke-width="1" stroke-dasharray="1 2"/></svg>
<svg style="left:9px;top:406px;" width="6" height="1" viewBox="0 0 6 1"><line x1="0" y1="0.5" x2="6" y2="0.5" stroke="#a0a0a0" stroke-width="1" stroke-dasharray="1 2"/></svg>
<svg style="left:21px;top:167px;" width="1" height="9" viewBox="0 0 1 9"><line x1="0.5" y1="0" x2="0.5" y2="9" stroke="#a0a0a0" stroke-width="1" stroke-dasharray="1 2"/></svg>
<svg style="left:21px;top:176px;" width="9" height="1" viewBox="0 0 9 1"><line x1="0" y1="0.5" x2="9" y2="0.5" stroke="#a0a0a0" stroke-width="1" stroke-dasharray="1 2"/></svg>
<svg style="left:21px;top:197px;" width="1" height="87" viewBox="0 0 1 87"><line x1="0.5" y1="0" x2="0.5" y2="87" stroke="#a0a0a0" stroke-width="1" stroke-dasharray="1 2"/></svg>
<svg style="left:21px;top:207px;" width="9" height="1" viewBox="0 0 9 1"><line x1="0" y1="0.5" x2="9" y2="0.5" stroke="#a0a0a0" stroke-width="1" stroke-dasharray="1 2"/></svg>
<svg style="left:21px;top:222px;" width="9" height="1" viewBox="0 0 9 1"><line x1="0" y1="0.5" x2="9" y2="0.5" stroke="#a0a0a0" stroke-width="1" stroke-dasharray="1 2"/></svg>
<svg style="left:21px;top:238px;" width="9" height="1" viewBox="0 0 9 1"><line x1="0" y1="0.5" x2="9" y2="0.5" stroke="#a0a0a0" stroke-width="1" stroke-dasharray="1 2"/></svg>
<svg style="left:21px;top:253px;" width="9" height="1" viewBox="0 0 9 1"><line x1="0" y1="0.5" x2="9" y2="0.5" stroke="#a0a0a0" stroke-width="1" stroke-dasharray="1 2"/></svg>
<svg style="left:21px;top:268px;" width="9" height="1" viewBox="0 0 9 1"><line x1="0" y1="0.5" x2="9" y2="0.5" stroke="#a0a0a0" stroke-width="1" stroke-dasharray="1 2"/></svg>
<svg style="left:21px;top:284px;" width="9" height="1" viewBox="0 0 9 1"><line x1="0" y1="0.5" x2="9" y2="0.5" stroke="#a0a0a0" stroke-width="1" stroke-dasharray="1 2"/></svg>
<svg style="left:21px;top:330px;" width="7" height="1" viewBox="0 0 7 1"><line x1="0" y1="0.5" x2="7" y2="0.5" stroke="#a0a0a0" stroke-width="1" stroke-dasharray="1 2"/></svg>
<svg style="left:21px;top:320px;" width="1" height="10" viewBox="0 0 1 10"><line x1="0.5" y1="0" x2="0.5" y2="10" stroke="#a0a0a0" stroke-width="1" stroke-dasharray="1 2"/></svg>
<svg style="left:21px;top:360px;" width="7" height="1" viewBox="0 0 7 1"><line x1="0" y1="0.5" x2="7" y2="0.5" stroke="#a0a0a0" stroke-width="1" stroke-dasharray="1 2"/></svg>
<svg style="left:21px;top:351px;" width="1" height="9" viewBox="0 0 1 9"><line x1="0.5" y1="0" x2="0.5" y2="9" stroke="#a0a0a0" stroke-width="1" stroke-dasharray="1 2"/></svg>
<svg style="left:21px;top:391px;" width="7" height="1" viewBox="0 0 7 1"><line x1="0" y1="0.5" x2="7" y2="0.5" stroke="#a0a0a0" stroke-width="1" stroke-dasharray="1 2"/></svg>
<svg style="left:21px;top:381px;" width="1" height="10" viewBox="0 0 1 10"><line x1="0.5" y1="0" x2="0.5" y2="10" stroke="#a0a0a0" stroke-width="1" stroke-dasharray="1 2"/></svg>
<div style="left:28px;top:200px;width:127px;height:14px;background:#b6d4ec"></div>
<svg style="left:5px;top:157.8px;" width="8" height="6" viewBox="0 0 8 6"><path d="M1 1.5 H7 L4 4.8 Z" fill="#333"/></svg>
<svg style="left:15px;top:152.8px;" width="15" height="15" viewBox="0 0 15 15"><path d="M1 3 H5 L6.5 4.5 H12 V12 H1 Z" fill="#f0c060" stroke="#c08830" stroke-width="0.6"/><path d="M4 10 L9 7.5 L14 10 L9 12.5 Z" fill="#2a40d0"/><path d="M4 10 V11.5 L9 14 L14 11.5 V10 L9 12.5 Z" fill="#101c90"/></svg>
<div class="t" style="left:30.80px;top:150.87px;font-size:9.60px;font-family:'Liberation Sans',sans-serif;font-weight:normal;color:#333333;transform:scaleX(0.9080);transform-origin:0 0;">Components (1)</div>
<svg style="left:31px;top:169.5px;" width="10" height="14" viewBox="0 0 10 14"><path d="M1 3 L9 1 V11 L1 13 Z" fill="#5a84d0" stroke="#2a4a90" stroke-width="0.6"/></svg>
<svg style="left:42px;top:169.5px;" width="12" height="14" viewBox="0 0 12 14"><rect x="1.5" y="1.5" width="9" height="10" fill="#7080b8" stroke="#303868" stroke-width="0.9"/><path d="M6 1.5 V11.5 M1.5 6.5 H10.5" stroke="#dde" stroke-width="0.9"/></svg>
<div class="t" style="left:56.50px;top:166.57px;font-size:9.60px;font-family:'Liberation Sans',sans-serif;font-weight:bold;color:#1a1a1a;">NewCap_Body_0</div>
<svg style="left:5px;top:188.8px;" width="8" height="6" viewBox="0 0 8 6"><path d="M1 1.5 H7 L4 4.8 Z" fill="#333"/></svg>
<svg style="left:15px;top:183.8px;" width="15" height="15" viewBox="0 0 15 15"><path d="M1 3 H5 L6.5 4.5 H12 V12 H1 Z" fill="#f0c060" stroke="#c08830" stroke-width="0.6"/><path d="M6 3 V9 M3.5 7 L6 10 L8.5 7" stroke="#e02020" stroke-width="1.6" fill="none"/><rect x="9" y="9" width="4" height="4" fill="#30b030"/></svg>
<div class="t" style="left:30.80px;top:181.87px;font-size:9.60px;font-family:'Liberation Sans',sans-serif;font-weight:normal;color:#333333;transform:scaleX(0.9099);transform-origin:0 0;">Load Collectors (6)</div>
<svg style="left:31px;top:199.8px;" width="10" height="14" viewBox="0 0 10 14"><path d="M1 3 L9 1 V11 L1 13 Z" fill="#5a84d0" stroke="#2a4a90" stroke-width="0.6"/></svg>
<svg style="left:42px;top:199.8px;" width="12" height="14" viewBox="0 0 12 14"><rect x="1.5" y="1.5" width="9" height="10" fill="#7080b8" stroke="#303868" stroke-width="0.9"/><path d="M6 1.5 V11.5 M1.5 6.5 H10.5" stroke="#dde" stroke-width="0.9"/></svg>
<div class="t" style="left:56.50px;top:196.87px;font-size:9.60px;font-family:'Liberation Sans',sans-serif;font-weight:normal;color:#333333;transform:scaleX(0.9176);transform-origin:0 0;">Bodyweigth_350N</div>
<svg style="left:31px;top:215.3px;" width="10" height="14" viewBox="0 0 10 14"><path d="M1 3 L9 1 V11 L1 13 Z" fill="#5a84d0" stroke="#2a4a90" stroke-width="0.6"/></svg>
<svg style="left:42px;top:215.3px;" width="12" height="14" viewBox="0 0 12 14"><rect x="1.5" y="1.5" width="9" height="10" fill="#7080b8" stroke="#303868" stroke-width="0.9"/><path d="M6 1.5 V11.5 M1.5 6.5 H10.5" stroke="#dde" stroke-width="0.9"/></svg>
<div class="t" style="left:56.50px;top:212.37px;font-size:9.60px;font-family:'Liberation Sans',sans-serif;font-weight:normal;color:#333333;transform:scaleX(0.8959);transform-origin:0 0;">Constraints</div>
<svg style="left:31px;top:230.5px;" width="10" height="14" viewBox="0 0 10 14"><path d="M1 3 L9 1 V11 L1 13 Z" fill="#5a84d0" stroke="#2a4a90" stroke-width="0.6"/></svg>
<svg style="left:42px;top:230.5px;" width="12" height="14" viewBox="0 0 12 14"><rect x="1.5" y="1.5" width="9" height="10" fill="#7080b8" stroke="#303868" stroke-width="0.9"/><path d="M6 1.5 V11.5 M1.5 6.5 H10.5" stroke="#dde" stroke-width="0.9"/></svg>
<div class="t" style="left:56.50px;top:227.57px;font-size:9.60px;font-family:'Liberation Sans',sans-serif;font-weight:normal;color:#333333;transform:scaleX(0.9214);transform-origin:0 0;">Bodyweight_350N</div>
<svg style="left:31px;top:246px;" width="10" height="14" viewBox="0 0 10 14"><path d="M1 3 L9 1 V11 L1 13 Z" fill="#5a84d0" stroke="#2a4a90" stroke-width="0.6"/></svg>
<svg style="left:42px;top:246px;" width="12" height="14" viewBox="0 0 12 14"><rect x="1.5" y="1.5" width="9" height="10" fill="#7080b8" stroke="#303868" stroke-width="0.9"/><path d="M6 1.5 V11.5 M1.5 6.5 H10.5" stroke="#dde" stroke-width="0.9"/></svg>
<div class="t" style="left:56.50px;top:243.07px;font-size:9.60px;font-family:'Liberation Sans',sans-serif;font-weight:normal;color:#333333;transform:scaleX(0.8898);transform-origin:0 0;">5_KGF_Actuator_375N</div>
<svg style="left:31px;top:261.2px;" width="10" height="14" viewBox="0 0 10 14"><path d="M1 3 L9 1 V11 L1 13 Z" fill="#5a84d0" stroke="#2a4a90" stroke-width="0.6"/></svg>
<svg style="left:42px;top:261.2px;" width="12" height="14" viewBox="0 0 12 14"><rect x="1.5" y="1.5" width="9" height="10" fill="#7080b8" stroke="#303868" stroke-width="0.9"/><path d="M6 1.5 V11.5 M1.5 6.5 H10.5" stroke="#dde" stroke-width="0.9"/></svg>
<div class="t" style="left:56.50px;top:258.27px;font-size:9.60px;font-family:'Liberation Sans',sans-serif;font-weight:normal;color:#333333;transform:scaleX(0.8893);transform-origin:0 0;">10_KGF_Actuator_425N</div>
<svg style="left:31px;top:276.5px;" width="10" height="14" viewBox="0 0 10 14"><path d="M1 3 L9 1 V11 L1 13 Z" fill="#5a84d0" stroke="#2a4a90" stroke-width="0.6"/></svg>
<svg style="left:42px;top:276.5px;" width="12" height="14" viewBox="0 0 12 14"><rect x="1.5" y="1.5" width="9" height="10" fill="#7080b8" stroke="#303868" stroke-width="0.9"/><path d="M6 1.5 V11.5 M1.5 6.5 H10.5" stroke="#dde" stroke-width="0.9"/></svg>
<div class="t" style="left:56.50px;top:273.57px;font-size:9.60px;font-family:'Liberation Sans',sans-serif;font-weight:bold;color:#1a1a1a;">Final_ite1</div>
<svg style="left:5px;top:296px;" width="8" height="6" viewBox="0 0 8 6"><path d="M2 1 V5 L5 3 Z" fill="#888"/></svg>
<svg style="left:15px;top:291px;" width="15" height="15" viewBox="0 0 15 15"><path d="M1 3 H5 L6.5 4.5 H12 V12 H1 Z" fill="#f0c060" stroke="#c08830" stroke-width="0.6"/><circle cx="9" cy="10" r="3.2" fill="#20c040"/><path d="M6 4 V9" stroke="#e02020" stroke-width="1.4"/></svg>
<div class="t" style="left:30.80px;top:289.07px;font-size:9.60px;font-family:'Liberation Sans',sans-serif;font-weight:normal;color:#333333;transform:scaleX(0.9131);transform-origin:0 0;">Load Steps (1)</div>
<svg style="left:5px;top:311.3px;" width="8" height="6" viewBox="0 0 8 6"><path d="M1 1.5 H7 L4 4.8 Z" fill="#333"/></svg>
<svg style="left:15px;top:306.3px;" width="15" height="15" viewBox="0 0 15 15"><path d="M1 3 H5 L6.5 4.5 H12 V12 H1 Z" fill="#f0c060" stroke="#c08830" stroke-width="0.6"/><path d="M6 13 V8 Q9 6 12 8 V13" stroke="#c03030" stroke-width="1.2" fill="none"/><path d="M5 13 H13" stroke="#444"/></svg>
<div class="t" style="left:30.80px;top:304.37px;font-size:9.60px;font-family:'Liberation Sans',sans-serif;font-weight:normal;color:#333333;transform:scaleX(0.9092);transform-origin:0 0;">Materials (1)</div>
<svg style="left:29px;top:322.6px;" width="12" height="14" viewBox="0 0 12 14"><path d="M3 12 V5 Q6 2 10 4 V12" stroke="#c03030" stroke-width="1.3" fill="none"/><path d="M2 12 H11 M5 7 H9 M5 9.5 H9" stroke="#555" stroke-width="0.8"/></svg>
<div class="t" style="left:45.40px;top:319.67px;font-size:9.60px;font-family:'Liberation Sans',sans-serif;font-weight:normal;color:#333333;transform:scaleX(0.9093);transform-origin:0 0;">PLA</div>
<svg style="left:5px;top:342px;" width="8" height="6" viewBox="0 0 8 6"><path d="M1 1.5 H7 L4 4.8 Z" fill="#333"/></svg>
<svg style="left:15px;top:337px;" width="15" height="15" viewBox="0 0 15 15"><path d="M2 4 L8 2 L12 4 V12 L6 14 L2 12 Z" fill="#909090"/><path d="M2 4 L6 6 V14 L2 12 Z" fill="#c0c0c0"/></svg>
<div class="t" style="left:30.80px;top:335.07px;font-size:9.60px;font-family:'Liberation Sans',sans-serif;font-weight:normal;color:#333333;transform:scaleX(0.8830);transform-origin:0 0;">Parts (1)</div>
<svg style="left:29px;top:353.3px;" width="12" height="14" viewBox="0 0 12 14"><path d="M2 3 L8 1 L11 3 V11 L5 13 L2 11 Z" fill="#8a8ad8" stroke="#404090" stroke-width="0.7"/><path d="M2 3 L5 5 V13" stroke="#404090" stroke-width="0.7" fill="none"/></svg>
<div class="t" style="left:45.40px;top:350.37px;font-size:9.60px;font-family:'Liberation Sans',sans-serif;font-weight:bold;color:#1a1a1a;transform:scaleX(1.0165);transform-origin:0 0;">NewCap</div>
<svg style="left:5px;top:372.7px;" width="8" height="6" viewBox="0 0 8 6"><path d="M1 1.5 H7 L4 4.8 Z" fill="#333"/></svg>
<svg style="left:15px;top:367.7px;" width="15" height="15" viewBox="0 0 15 15"><path d="M1 3 H5 L6.5 4.5 H12 V12 H1 Z" fill="#f0c060" stroke="#c08830" stroke-width="0.6"/><path d="M4 10 L9 8 L14 10 L9 12.5 Z" fill="#888" stroke="#444" stroke-width="0.5"/><path d="M4 8 L9 6 L14 8" stroke="#666" fill="none"/></svg>
<div class="t" style="left:30.80px;top:365.77px;font-size:9.60px;font-family:'Liberation Sans',sans-serif;font-weight:normal;color:#333333;transform:scaleX(0.9337);transform-origin:0 0;">Properties (1)</div>
<svg style="left:28px;top:383.8px;" width="14" height="14" viewBox="0 0 14 14"><path d="M2 8 L7 5.5 L12 8 L7 10.5 Z" fill="#999" stroke="#444" stroke-width="0.6"/><path d="M2 8 V9.5 L7 12 L12 9.5 V8" fill="#777"/><path d="M3 3 L5 5" stroke="#444" stroke-width="0.6"/></svg>
<div class="t" style="left:45.40px;top:380.87px;font-size:9.60px;font-family:'Liberation Sans',sans-serif;font-weight:normal;color:#333333;transform:scaleX(0.9084);transform-origin:0 0;">Calf_Motor_Cap</div>
<svg style="left:5px;top:403px;" width="8" height="6" viewBox="0 0 8 6"><path d="M2 1 V5 L5 3 Z" fill="#888"/></svg>
<svg style="left:15px;top:398px;" width="15" height="15" viewBox="0 0 15 15"><path d="M1 3 H5 L6.5 4.5 H12 V12 H1 Z" fill="#f0c060" stroke="#c08830" stroke-width="0.6"/><rect x="6" y="6" width="7" height="7" fill="#fff" stroke="#333" stroke-width="0.8"/><path d="M8 8 H12 M8 10 H12" stroke="#333" stroke-width="0.6"/></svg>
<div class="t" style="left:30.80px;top:396.07px;font-size:9.60px;font-family:'Liberation Sans',sans-serif;font-weight:normal;color:#333333;transform:scaleX(0.9059);transform-origin:0 0;">Titles (1)</div>
<div style="left:3px;top:458px;width:176px;height:10px;background:#f0f0f0"></div>
<div style="left:12px;top:459px;width:129px;height:8px;background:#e4e4e4;border:1px solid #c0c0c0"></div>
<svg style="left:4px;top:459px;" width="6" height="8" viewBox="0 0 6 8"><path d="M4.5 1.5 L1.5 4 L4.5 6.5" stroke="#444" stroke-width="1" fill="none"/></svg>
<div style="left:3px;top:468px;width:176px;height:9px;background:#f0f0f0;border-bottom:1px solid #d8d8d8"></div>
<div style="left:86px;top:471px;width:1px;height:1px;background:#777"></div>
<div style="left:92px;top:471px;width:1px;height:1px;background:#777"></div>
<div style="left:98px;top:471px;width:1px;height:1px;background:#777"></div>
<div style="left:3px;top:478px;width:176px;height:16px;background:#f0f0f0"></div>
<div class="t" style="left:4.50px;top:476.80px;font-size:9.80px;font-family:'Liberation Sans',sans-serif;font-weight:normal;color:#2a2a2a;">Name</div>
<div class="t" style="left:84.40px;top:476.80px;font-size:9.80px;font-family:'Liberation Sans',sans-serif;font-weight:normal;color:#2a2a2a;transform:scaleX(1.0272);transform-origin:0 0;">Value</div>
<div style="left:3px;top:494px;width:176px;height:168px;background:#ffffff"></div>
<div class="t" style="left:16.70px;top:491.07px;font-size:9.60px;font-family:'Liberation Sans',sans-serif;font-weight:normal;color:#333;transform:scaleX(0.9407);transform-origin:0 0;">Name:</div>
<div class="t" style="left:85.40px;top:491.07px;font-size:9.60px;font-family:'Liberation Sans',sans-serif;font-weight:normal;color:#333;transform:scaleX(0.8983);transform-origin:0 0;">Bodyweigth_350N</div>
<div class="t" style="left:16.70px;top:506.07px;font-size:9.60px;font-family:'Liberation Sans',sans-serif;font-weight:normal;color:#333;transform:scaleX(0.8478);transform-origin:0 0;">ID:</div>
<div class="t" style="left:85.40px;top:506.07px;font-size:9.60px;font-family:'Liberation Sans',sans-serif;font-weight:normal;color:#333;">1</div>
<div class="t" style="left:16.70px;top:521.77px;font-size:9.60px;font-family:'Liberation Sans',sans-serif;font-weight:normal;color:#333;transform:scaleX(0.9098);transform-origin:0 0;">Color:</div>
<div class="t" style="left:16.70px;top:537.07px;font-size:9.60px;font-family:'Liberation Sans',sans-serif;font-weight:normal;color:#9a9a9a;transform:scaleX(0.9160);transform-origin:0 0;">Include:</div>
<div class="t" style="left:85.40px;top:537.07px;font-size:9.60px;font-family:'Liberation Sans',sans-serif;font-weight:normal;color:#9a9a9a;transform:scaleX(0.9462);transform-origin:0 0;">[Main Model]</div>
<div class="t" style="left:16.70px;top:552.57px;font-size:9.60px;font-family:'Liberation Sans',sans-serif;font-weight:normal;color:#333;transform:scaleX(0.9068);transform-origin:0 0;">Card Image:</div>
<div class="t" style="left:85.40px;top:552.57px;font-size:9.60px;font-family:'Liberation Sans',sans-serif;font-weight:normal;color:#333;transform:scaleX(0.9162);transform-origin:0 0;">&lt;None&gt;</div>
<div style="left:85px;top:527px;width:10px;height:10px;background:#0000e8;border:1px solid #00007a"></div>
<div style="left:3px;top:570px;width:176px;height:16px;background:#eeeeee"></div>
<div class="t" style="left:16.00px;top:567.97px;font-size:9.60px;font-family:'Liberation Sans',sans-serif;font-weight:bold;color:#111;transform:scaleX(1.0333);transform-origin:0 0;">Metadata</div>
<div style="left:182px;top:60px;width:1.2px;height:603px;background:#111"></div>
<div style="left:178.5px;top:60px;width:1px;height:603px;background:#b8b8b8"></div>
<svg style="left:189px;top:76px;" width="15" height="4" viewBox="0 0 15 4"><rect x="1" y="1" width="1.3" height="1.3" fill="#444"/><rect x="4" y="1" width="1.3" height="1.3" fill="#444"/><rect x="7" y="1" width="1.3" height="1.3" fill="#444"/><rect x="10" y="1" width="1.3" height="1.3" fill="#444"/><rect x="13" y="1" width="1.3" height="1.3" fill="#444"/></svg>
<svg style="left:189px;top:82px;" width="16" height="17" viewBox="0 0 16 17"><path d="M2 5 L14 2 V12 L2 15 Z" fill="#3a4078" stroke="#202858" stroke-width="0.6"/><path d="M9 3.7 L14 2 V12 L9 13.3 Z" fill="#f4f4fa" stroke="#8890b8" stroke-width="0.6"/><path d="M5 4.2 V14.2 M9 3.2 V13.2 M11.5 2.6 V12.6 M2 8.5 L14 5.5 M2 11.8 L14 8.8" stroke="#c8cce8" stroke-width="0.7"/><rect x="1.2" y="8.2" width="7.6" height="8" fill="none" stroke="#e04020" stroke-width="1.1"/></svg>
<svg style="left:189px;top:100.3px;" width="16" height="17" viewBox="0 0 16 17"><path d="M2 5 L14 2 V12 L2 15 Z" fill="#3a4078" stroke="#202858" stroke-width="0.6"/><path d="M9 3.7 L14 2 V12 L9 13.3 Z" fill="#f4f4fa" stroke="#8890b8" stroke-width="0.6"/><path d="M5 4.2 V14.2 M9 3.2 V13.2 M11.5 2.6 V12.6 M2 8.5 L14 5.5 M2 11.8 L14 8.8" stroke="#c8cce8" stroke-width="0.7"/><path d="M8 15 Q12 16 15 11" stroke="#e02020" stroke-width="2.2" fill="none"/></svg>
<svg style="left:189px;top:119px;" width="16" height="17" viewBox="0 0 16 17"><path d="M2 5 L14 2 V12 L2 15 Z" fill="#3a4078" stroke="#202858" stroke-width="0.6"/><path d="M9 3.7 L14 2 V12 L9 13.3 Z" fill="#f4f4fa" stroke="#8890b8" stroke-width="0.6"/><path d="M5 4.2 V14.2 M9 3.2 V13.2 M11.5 2.6 V12.6 M2 8.5 L14 5.5 M2 11.8 L14 8.8" stroke="#c8cce8" stroke-width="0.7"/></svg>
<svg style="left:189px;top:137px;" width="16" height="17" viewBox="0 0 16 17"><path d="M2 5 L14 2 V12 L2 15 Z" fill="#3a4078" stroke="#202858" stroke-width="0.6"/><path d="M5 4.2 V14.2 M9 3.2 V13.2 M11.5 2.6 V12.6 M2 8.5 L14 5.5 M2 11.8 L14 8.8" stroke="#c8cce8" stroke-width="0.7"/></svg>
<div style="left:208px;top:73px;width:1065px;height:422px;background:linear-gradient(to bottom,#2d5681 0%,#3d5d82 18%,#5a7390 45%,#7d8a98 70%,#a2a2a3 100%);border:1px solid #4ee2ee"></div>
<div class="t" style="left:281.00px;top:73.82px;font-size:12.06px;font-family:'Liberation Sans',sans-serif;font-weight:normal;color:#f4f6fa;">Model Info: Z:/Hyperspawn Robotics/Internship/Hypermesh/Analyses/calf_motor_cap/Test/calf_motor_cap_PLA_MATassigned_comped_meshed_elesize5e-5_5_KGF_Actuator_ite1.hm*</div>
<svg style="left:209px;top:74px;" width="1063" height="420" viewBox="0 0 1063 420"><defs><radialGradient id="pk" cx="503" cy="326" r="125" gradientUnits="userSpaceOnUse"><stop offset="0" stop-color="#ff2c98"/><stop offset="0.3" stop-color="#f5197f"/><stop offset="0.62" stop-color="#d41068"/><stop offset="0.85" stop-color="#b00c56"/><stop offset="1" stop-color="#980a4a"/></radialGradient><pattern id="mesh" width="3" height="3" patternUnits="userSpaceOnUse"><rect width="3" height="3" fill="#9079e4"/><rect x="0" y="0" width="1" height="1" fill="#7560cc"/><rect x="2" y="1" width="1" height="1" fill="#a48ef2"/></pattern></defs><ellipse cx="515.3" cy="307.3" rx="101.6" ry="113" fill="#a00c50" stroke="#5ad048" stroke-width="1.1"/><ellipse cx="520.2" cy="308.9" rx="83.4" ry="108.9" transform="rotate(6.9 520.2 308.9)" fill="url(#pk)" stroke="#ccd448" stroke-width="1"/><ellipse cx="490.29999999999995" cy="310.6" rx="73.1" ry="84.7" fill="none" stroke="#ccd448" stroke-width="1"/><circle cx="471.1" cy="308.7" r="71.9" fill="none" stroke="#ccd448" stroke-width="1"/><circle cx="472.4" cy="310.6" r="43.8" fill="none" stroke="#ccd448" stroke-width="1"/><path d="M532.7 318.5 L563.5 322.7" stroke="#c4d044" stroke-width="1"/><path d="M516.0 317.0 h2 M525.0 318.0 h2" stroke="#d8c860" stroke-width="1"/><path d="M491.0 171.0 L496.0 171.0 A 24 25 0 0 0 520.0 146.0 L535.0 145.5 L532.0 166.0 L529.0 188.0 L526.0 205.4 L516.3 244.3 L507.5 269.6 L502.7 294.8 L500.7 312.3 L498.0 318.0 L491.0 318.0 Z" fill="url(#mesh)"/><path d="M491.0 171.0 L496.0 171.0 A 24 25 0 0 0 520.0 146.0 L535.0 145.5 L532.5 165.0 L497.0 189.0 L491.0 190.0 Z" fill="#a88cf4"/><path d="M495.0 256.0 L507.0 258.0 L504.0 272.0 L495.0 272.0 Z" fill="#c070d0" opacity="0.6"/><path d="M495.0 274.0 H514.0 M495.0 278.0 H513.0 M495.0 282.0 H511.0 M495.0 286.0 H510.0 M495.0 290.0 H509.0" stroke="#3040b0" stroke-width="1.6"/><path d="M495.0 320.0 H504.0 M495.0 324.0 H504.0 M495.0 328.0 H504.0" stroke="#f08a40" stroke-width="1.5"/></svg>
<svg style="left:705px;top:505px;" width="6" height="4" viewBox="0 0 6 4"><path d="M0.5 0.5 H5.5 L3 3.5 Z" fill="#222"/></svg>
<svg style="left:712px;top:501px;" width="18" height="12" viewBox="0 0 18 12"><path d="M1 6 L9 2 L17 6 L9 10 Z" fill="#8a8a8a" stroke="#555" stroke-width="0.6"/><path d="M5 4 L13 8 M13 4 L5 8" stroke="#555" stroke-width="0.6"/></svg>
<svg style="left:730.5px;top:505px;" width="6" height="4" viewBox="0 0 6 4"><path d="M0.5 0.5 H5.5 L3 3.5 Z" fill="#222"/></svg>
<svg style="left:737px;top:500px;" width="19" height="13" viewBox="0 0 19 13"><path d="M1 6 L9.5 1.5 L18 6 L9.5 10.5 Z" fill="#8890e8" stroke="#3038a8" stroke-width="0.8"/><path d="M1 6 V8 L9.5 12.5 L18 8 V6 L9.5 10.5 Z" fill="#4048c0"/></svg>
<svg style="left:756px;top:505px;" width="6" height="4" viewBox="0 0 6 4"><path d="M0.5 0.5 H5.5 L3 3.5 Z" fill="#222"/></svg>
<svg style="left:766px;top:499px;" width="14" height="16" viewBox="0 0 14 16"><path d="M1 6 L5 5 V9 L1 10 Z M7 4.5 L11 3.5 V7.5 L7 8.5 Z M1 12 L5 11 V14 L1 15 Z M7 10.5 L11 9.5 V12.5 L7 13.5 Z" fill="#7a7cc0"/></svg>
<svg style="left:783px;top:499px;" width="16" height="16" viewBox="0 0 16 16"><defs><linearGradient id="mon" x1="0" y1="0" x2="1" y2="1"><stop offset="0" stop-color="#9cd0f4"/><stop offset="1" stop-color="#2a70c0"/></linearGradient></defs><rect x="1" y="1.5" width="13.5" height="10.5" fill="url(#mon)" stroke="#3a5a80" stroke-width="0.8"/><path d="M7.7 12 V14.5 M5 14.8 H10.5" stroke="#333" stroke-width="1.3"/></svg>
<svg style="left:805px;top:499px;" width="2" height="16" viewBox="0 0 2 16"><rect x="0" y="1" width="1.3" height="1.3" fill="#444"/><rect x="0" y="4" width="1.3" height="1.3" fill="#444"/><rect x="0" y="7" width="1.3" height="1.3" fill="#444"/><rect x="0" y="10" width="1.3" height="1.3" fill="#444"/><rect x="0" y="13" width="1.3" height="1.3" fill="#444"/></svg>
<svg style="left:812px;top:499px;" width="15" height="15" viewBox="0 0 15 15"><defs><linearGradient id="st" x1="0" y1="0" x2="0" y2="1"><stop offset="0" stop-color="#ffe060"/><stop offset="1" stop-color="#e8a000"/></linearGradient></defs><path d="M7.5 1 L9.4 5.4 L14 5.8 L10.5 8.9 L11.6 13.6 L7.5 11.1 L3.4 13.6 L4.5 8.9 L1 5.8 L5.6 5.4 Z" fill="url(#st)" stroke="#c08a00" stroke-width="0.5"/></svg>
<svg style="left:834px;top:499px;" width="2" height="16" viewBox="0 0 2 16"><rect x="0" y="1" width="1.3" height="1.3" fill="#444"/><rect x="0" y="4" width="1.3" height="1.3" fill="#444"/><rect x="0" y="7" width="1.3" height="1.3" fill="#444"/><rect x="0" y="10" width="1.3" height="1.3" fill="#444"/><rect x="0" y="13" width="1.3" height="1.3" fill="#444"/></svg>
<svg style="left:840px;top:499px;" width="16" height="16" viewBox="0 0 16 16"><rect x="1.5" y="1.5" width="13" height="13" rx="4" fill="#9ab4dc"/><ellipse cx="8" cy="8" rx="3" ry="2.2" fill="#f4f8ff"/><ellipse cx="4" cy="4" rx="2" ry="1.5" fill="#e8f0fc"/><ellipse cx="12" cy="12" rx="2" ry="1.5" fill="#e8f0fc"/><ellipse cx="12" cy="4" rx="1.6" ry="1.2" fill="#e8f0fc"/><ellipse cx="4" cy="12" rx="1.6" ry="1.2" fill="#e8f0fc"/></svg>
<svg style="left:858px;top:505px;" width="6" height="4" viewBox="0 0 6 4"><path d="M0.5 0.5 H5.5 L3 3.5 Z" fill="#222"/></svg>
<div style="left:705px;top:523px;width:568px;height:1px;background:#b4b4b4"></div>
<div style="left:690px;top:537.5px;width:290px;height:17.5px;background:#ffffff;border-top:1.5px solid #8a8a8a;border-left:1px solid #8a8a8a"></div>
<div class="t" style="left:706.00px;top:537.05px;font-size:11.40px;font-family:'Liberation Sans',sans-serif;font-weight:normal;color:#111;transform:scaleX(1.0335);transform-origin:0 0;">meshed_elesize5e-5_5_KGF_Actuator_ite1.fem</div>
<div style="left:1009px;top:537.5px;width:88px;height:16.5px;background:#f0f0f0;border-top:1px solid #ffffff;border-left:1px solid #ffffff;border-right:1.5px solid #505050;border-bottom:1.5px solid #505050"></div>
<div class="t" style="left:1028.50px;top:535.87px;font-size:11.20px;font-family:'Liberation Sans',sans-serif;font-weight:normal;color:#111;transform:scaleX(1.0223);transform-origin:0 0;">save as...</div>
<div style="left:1126px;top:537.5px;width:132px;height:17px;background:#5ec05e;border-top:1px solid #5ec05e;border-left:1px solid #5ec05e;border-right:1.5px solid #505050;border-bottom:1.5px solid #505050"></div>
<div class="t" style="left:1166.00px;top:536.12px;font-size:11.20px;font-family:'Liberation Sans',sans-serif;font-weight:normal;color:#111;transform:scaleX(1.0443);transform-origin:0 0;">OptiStruct</div>
<div class="t" style="left:783.60px;top:570.08px;font-size:11.30px;font-family:'Liberation Sans',sans-serif;font-weight:normal;color:#111;transform:scaleX(1.0775);transform-origin:0 0;">memory options:</div>
<div style="left:1126px;top:571px;width:132px;height:17px;background:#5ec05e;border-top:1px solid #5ec05e;border-left:1px solid #5ec05e;border-right:1.5px solid #505050;border-bottom:1.5px solid #505050"></div>
<div class="t" style="left:1164.00px;top:569.62px;font-size:11.20px;font-family:'Liberation Sans',sans-serif;font-weight:normal;color:#3a7a3a;transform:scaleX(1.0380);transform-origin:0 0;">HyperView</div>
<div style="left:690px;top:588px;width:46.5px;height:16.5px;background:#f0f0f0;border-top:1px solid #ffffff;border-left:1px solid #ffffff;border-right:1.5px solid #505050;border-bottom:1.5px solid #505050"></div>
<div class="t" style="left:713.25px;top:586.37px;font-size:11.20px;font-family:'Liberation Sans',sans-serif;font-weight:normal;color:#111;"></div>
<div style="left:752px;top:588px;width:30.5px;height:16.5px;background:#f0f0f0;border-top:1px solid #ffffff;border-left:1px solid #ffffff;border-right:1.5px solid #505050;border-bottom:1.5px solid #505050"></div>
<div class="t" style="left:767.25px;top:586.37px;font-size:11.20px;font-family:'Liberation Sans',sans-serif;font-weight:normal;color:#111;"></div>
<svg style="left:763px;top:591px;" width="8" height="11" viewBox="0 0 8 11"><path d="M4 1 L7 4.5 H1 Z M4 10 L7 6.5 H1 Z" fill="#111"/></svg>
<div style="left:782px;top:588px;width:183px;height:16.5px;background:#f0f0f0;border-top:1px solid #ffffff;border-left:1px solid #ffffff;border-right:1.5px solid #505050;border-bottom:1.5px solid #505050"></div>
<div class="t" style="left:830.50px;top:586.33px;font-size:11.30px;font-family:'Liberation Sans',sans-serif;font-weight:normal;color:#111;transform:scaleX(1.1043);transform-origin:0 0;">memory default</div>
<div style="left:1126px;top:604.5px;width:132px;height:17px;background:#5ec05e;border-top:1px solid #5ec05e;border-left:1px solid #5ec05e;border-right:1.5px solid #505050;border-bottom:1.5px solid #505050"></div>
<div class="t" style="left:1170.00px;top:603.12px;font-size:11.20px;font-family:'Liberation Sans',sans-serif;font-weight:normal;color:#111;">view .out</div>
<div style="left:185px;top:625px;width:1088px;height:37px;background:linear-gradient(to bottom,#f0f0f0,#f0f0f0)"></div>
<div style="left:302px;top:639px;width:13px;height:13px;background:#f4f4f4;border-top:1.5px solid #888;border-left:1.5px solid #888;border-right:1px solid #fff;border-bottom:1px solid #fff"></div>
<div class="t" style="left:323.00px;top:636.08px;font-size:11.30px;font-family:'Liberation Sans',sans-serif;font-weight:normal;color:#111;transform:scaleX(1.0719);transform-origin:0 0;">include connectors</div>
<div class="t" style="left:553.50px;top:636.08px;font-size:11.30px;font-family:'Liberation Sans',sans-serif;font-weight:normal;color:#111;transform:scaleX(1.0738);transform-origin:0 0;">options:</div>
<div style="left:614px;top:638px;width:467px;height:17px;background:#ffffff;border-top:1.5px solid #8a8a8a;border-left:1px solid #8a8a8a"></div>
<div class="t" style="left:618.00px;top:636.58px;font-size:11.30px;font-family:'Liberation Sans',sans-serif;font-weight:normal;color:#111;transform:scaleX(1.0488);transform-origin:0 0;">-optskip</div>
<div style="left:1170px;top:638px;width:88px;height:16.5px;background:#c86262;border-top:1px solid #c86262;border-left:1px solid #c86262;border-right:1.5px solid #505050;border-bottom:1.5px solid #505050"></div>
<div class="t" style="left:1197.00px;top:636.37px;font-size:11.20px;font-family:'Liberation Sans',sans-serif;font-weight:normal;color:#111;transform:scaleX(1.1620);transform-origin:0 0;">return</div>
<div style="left:1170px;top:638px;width:88px;height:16.5px;border:1.5px solid #4a2a2a"></div>
<div style="left:185px;top:662px;width:1090px;height:1px;background:#6a6a6a"></div>
<div style="left:1274px;top:525px;width:1px;height:138px;background:#8a8a8a"></div>
<div style="left:156px;top:150px;width:549px;height:465px;background:#f0f0f0;border-radius:8px;box-shadow:0 26px 50px rgba(0,0,0,0.4),0 0 0 1px rgba(0,0,0,0.10)"></div>
<div style="left:156px;top:150px;width:549px;height:24px;background:#f6eef4;border-radius:8px 8px 0 0"></div>
<svg style="left:161px;top:156px;" width="14" height="13" viewBox="0 0 14 13"><path d="M3 12 Q0.5 11 1 7 Q1.5 2 5.5 1.5 Q9 1.5 9 5 L9 10 Q9 12 7 12 Z" fill="#48b8d8"/><path d="M9.5 12 Q13.5 12 13.5 8.5 Q13.5 5 10.5 5 L9 5 L9 12 Z" fill="#70cce4"/><path d="M4 10 V5 Q5 3.5 6.5 4.5 V10 Z" fill="#e8f8fc"/><circle cx="11" cy="9" r="1.6" fill="#e8f8fc"/></svg>
<div class="t" style="left:178.40px;top:152.63px;font-size:10.60px;font-family:'Liberation Sans',sans-serif;font-weight:normal;color:#1a1a1a;transform:scaleX(0.8926);transform-origin:0 0;">calf_motor_cap_PLA_MATassigned_comped_meshed_elesize5e-5_5_KGF_Actuator_ite1.fem -...</div>
<div style="left:602px;top:161.5px;width:10px;height:1px;background:#333"></div>
<div style="left:641px;top:157px;width:10px;height:10px;border:1px solid #222"></div>
<svg style="left:680px;top:157px;" width="11" height="11" viewBox="0 0 11 11"><path d="M0.8 0.8 L10.2 10.2 M10.2 0.8 L0.8 10.2" stroke="#222" stroke-width="1"/></svg>
<div class="t" style="left:161.00px;top:178.83px;font-size:10.60px;font-family:'Liberation Sans',sans-serif;font-weight:normal;color:#222;transform:scaleX(0.9093);transform-origin:0 0;">Solver:</div>
<div style="left:207px;top:180px;width:215.5px;height:16.5px;background:#ededed;border:1px solid #e6e6e6"></div>
<div class="t" style="left:208.60px;top:178.83px;font-size:10.60px;font-family:'Liberation Sans',sans-serif;font-weight:normal;color:#8c8c8c;transform:scaleX(0.9024);transform-origin:0 0;">optistruct_2022_win64.exe</div>
<div class="t" style="left:161.00px;top:200.33px;font-size:10.60px;font-family:'Liberation Sans',sans-serif;font-weight:normal;color:#222;transform:scaleX(0.9531);transform-origin:0 0;">Input file:</div>
<div style="left:207px;top:201.5px;width:215.5px;height:16.5px;background:#ededed;border:1px solid #e6e6e6"></div>
<div class="t" style="left:208.60px;top:200.33px;font-size:10.60px;font-family:'Liberation Sans',sans-serif;font-weight:normal;color:#8c8c8c;transform:scaleX(0.9050);transform-origin:0 0;">calf_motor_cap_PLA_MATassigned_comped_me</div>
<div class="t" style="left:437.70px;top:200.33px;font-size:10.60px;font-family:'Liberation Sans',sans-serif;font-weight:normal;color:#222;transform:scaleX(0.9515);transform-origin:0 0;">Job completed</div>
<div class="t" style="left:159.80px;top:242.33px;font-size:10.60px;font-family:'Liberation Sans',sans-serif;font-weight:normal;color:#222;transform:scaleX(0.9140);transform-origin:0 0;">Run command:</div>
<div class="t" style="left:228.80px;top:242.33px;font-size:10.60px;font-family:'Liberation Sans',sans-serif;font-weight:normal;color:#7a7a7a;transform:scaleX(0.9015);transform-origin:0 0;">../hwsolver.tcl -solver OS -screen .../calf_motor_cap_PLA_MATassigned_comped_meshed_elesize5e-5_5_KGF</div>
<div class="t" style="left:159.80px;top:261.33px;font-size:10.60px;font-family:'Liberation Sans',sans-serif;font-weight:normal;color:#222;transform:scaleX(0.9120);transform-origin:0 0;">Message log:</div>
<div style="left:158px;top:279.5px;width:456px;height:135px;background:#ffffff;border-left:1px solid #b4b4b4;border-top:1px solid #e0e0e0"></div>
<div class="t" style="left:159.30px;top:277.66px;font-size:11.06px;font-family:'Liberation Mono',monospace;font-weight:normal;color:#333;">Messages for the job:</div>
<div class="t" style="left:166.70px;top:317.26px;font-size:11.06px;font-family:'Liberation Mono',monospace;font-weight:normal;color:#333;">*** ERROR #  15 ***</div>
<div class="t" style="left:166.70px;top:330.86px;font-size:11.06px;font-family:'Liberation Mono',monospace;font-weight:normal;color:#333;">CTETRA element 1363926 is distorted (zero or negative Jacobian).</div>
<svg style="left:615px;top:282.5px;" width="8" height="6" viewBox="0 0 8 6"><path d="M0.5 5.5 H7.5 L4 0.5 Z" fill="#b0b0b0"/></svg>
<svg style="left:615px;top:404.8px;" width="8" height="6" viewBox="0 0 8 6"><path d="M0.5 0.5 H7.5 L4 5.5 Z" fill="#b0b0b0"/></svg>
<svg style="left:161.4px;top:417.8px;" width="6" height="8" viewBox="0 0 6 8"><path d="M5.5 0.5 V7.5 L0.5 4 Z" fill="#b0b0b0"/></svg>
<svg style="left:602px;top:417.8px;" width="6" height="8" viewBox="0 0 6 8"><path d="M0.5 0.5 V7.5 L5.5 4 Z" fill="#b0b0b0"/></svg>
<div class="t" style="left:630.00px;top:263.33px;font-size:10.60px;font-family:'Liberation Sans',sans-serif;font-weight:normal;color:#222;transform:scaleX(0.9464);transform-origin:0 0;overflow:hidden;">Optimiz</div>
<div style="left:666px;top:264px;width:36px;height:17px;background:#ffffff;border:1px solid #dcdcdc;border-radius:2px"></div>
<div class="t" style="left:669.80px;top:263.33px;font-size:10.60px;font-family:'Liberation Sans',sans-serif;font-weight:normal;color:#222;transform:scaleX(0.9334);transform-origin:0 0;">Graph</div>
<div style="left:688px;top:283px;width:17px;height:131.5px;background:#f0f0f0"></div>
<div style="left:629.5px;top:283px;width:59px;height:131.5px;background:#ffffff;border-left:1px solid #b4b4b4;border-top:1px solid #e4e4e4"></div>
<div style="left:631px;top:284px;width:57px;height:30px;overflow:hidden"><div class="t" style="left:0px;top:-3.2px;font-size:11.06px;font-family:'Liberation Mono',monospace;color:#333">Iteration</div><div class="t" style="left:0px;top:9.4px;font-size:11.06px;font-family:'Liberation Mono',monospace;color:#111;font-weight:bold">----------</div></div>
<svg style="left:692px;top:287px;" width="8" height="6" viewBox="0 0 8 6"><path d="M0.5 5.5 H7.5 L4 0.5 Z" fill="#b0b0b0"/></svg>
<svg style="left:692px;top:404.6px;" width="8" height="6" viewBox="0 0 8 6"><path d="M0.5 0.5 H7.5 L4 5.5 Z" fill="#b0b0b0"/></svg>
<div style="left:643px;top:419.5px;width:14px;height:4px;background:#8c8c8c;border-radius:1px"></div>
<div class="t" style="left:160.00px;top:430.93px;font-size:10.60px;font-family:'Liberation Sans',sans-serif;font-weight:normal;color:#222;transform:scaleX(0.8779);transform-origin:0 0;">Run summary:</div>
<div style="left:158.4px;top:449px;width:531px;height:118px;background:#ffffff;border-left:1px solid #a8a8a8;border-top:1px solid #d0d0d0;overflow:hidden"></div>
<div style="left:159px;top:449.5px;width:530px;height:3px;overflow:hidden"><div class="t" style="left:0px;top:-12px;font-size:11.06px;font-family:'Liberation Mono',monospace;color:#333">    Decomposition is necessary to limit the size of the</div></div>
<div class="t" style="left:166.70px;top:451.26px;font-size:11.06px;font-family:'Liberation Mono',monospace;font-weight:normal;color:#333;">*********************************************************</div>
<div class="t" style="left:166.70px;top:490.56px;font-size:11.06px;font-family:'Liberation Mono',monospace;font-weight:normal;color:#333;">*** ERROR #  15 ***</div>
<div class="t" style="left:166.70px;top:503.96px;font-size:11.06px;font-family:'Liberation Mono',monospace;font-weight:normal;color:#333;">CTETRA element 1363926 is distorted (zero or negative Jacobian).</div>
<div class="t" style="left:159.50px;top:530.36px;font-size:11.06px;font-family:'Liberation Mono',monospace;font-weight:normal;color:#333;">************************************************************************</div>
<div style="left:159px;top:559px;width:530px;height:8px;overflow:hidden"><div class="t" style="left:7px;top:-1px;font-size:11px;font-family:'Liberation Mono',monospace;color:#333">A fatal error has been detected during input processing:</div></div>
<svg style="left:161.5px;top:570.6px;" width="6" height="8" viewBox="0 0 6 8"><path d="M5.5 0.5 V7.5 L0.5 4 Z" fill="#b0b0b0"/></svg>
<svg style="left:679px;top:570.6px;" width="6" height="8" viewBox="0 0 6 8"><path d="M0.5 0.5 V7.5 L5.5 4 Z" fill="#b0b0b0"/></svg>
<div style="left:693.8px;top:504px;width:3.7px;height:17px;background:#8c8c8c;border-radius:1px"></div>
<div style="left:549.3px;top:450.6px;width:26px;height:18px;background:#ffffff;border:1px solid #cfcfcf;border-radius:2px"></div>
<div class="t" style="left:552.00px;top:449.90px;font-size:10.40px;font-family:'Liberation Sans',sans-serif;font-weight:normal;color:#222;transform:scaleX(0.9083);transform-origin:0 0;">Find:</div>
<div style="left:576px;top:449.5px;width:111px;height:19px;background:#ffffff;border:1px solid #d0d0d0;border-bottom:2px solid #9a9a9a"></div>
<div class="t" style="left:587.00px;top:589.73px;font-size:10.60px;font-family:'Liberation Sans',sans-serif;font-weight:normal;color:#222;transform:scaleX(0.9436);transform-origin:0 0;">View</div>
<svg style="left:613px;top:597px;" width="9" height="6" viewBox="0 0 9 6"><path d="M0.5 0.5 H8.5 L4.5 5 Z" fill="#222"/></svg>
<div style="left:630.5px;top:591px;width:68.5px;height:17.5px;background:#fdfdfd;border:1px solid #d4d4d4;border-bottom-color:#bcbcbc;border-radius:3px"></div>
<div class="t" style="left:653.00px;top:589.73px;font-size:10.60px;font-family:'Liberation Sans',sans-serif;font-weight:normal;color:#1a1a1a;transform:scaleX(0.8856);transform-origin:0 0;">Close</div>
<div style="left:0px;top:680px;width:1280px;height:40px;background:#231e25"></div>
<svg style="left:17px;top:690px;" width="21" height="21" viewBox="0 0 21 21"><defs><linearGradient id="wl" x1="0" y1="0" x2="1" y2="1"><stop offset="0" stop-color="#5ad2fa"/><stop offset="1" stop-color="#1890e8"/></linearGradient></defs><rect x="0.5" y="0.5" width="9.3" height="9.3" rx="0.8" fill="url(#wl)"/><rect x="10.8" y="0.5" width="9.3" height="9.3" rx="0.8" fill="url(#wl)"/><rect x="0.5" y="10.8" width="9.3" height="9.3" rx="0.8" fill="url(#wl)"/><rect x="10.8" y="10.8" width="9.3" height="9.3" rx="0.8" fill="url(#wl)"/></svg>
<div style="left:48px;top:687.3px;width:184px;height:26.4px;background:#3a383b;border-radius:13px;border:1px solid #47454a"></div>
<svg style="left:57px;top:693px;" width="14" height="14" viewBox="0 0 14 14"><circle cx="6" cy="6" r="4.5" fill="none" stroke="#e8e8e8" stroke-width="1.5"/><path d="M9.3 9.3 L12.8 12.8" stroke="#e8e8e8" stroke-width="1.6"/></svg>
<div class="t" style="left:78.70px;top:690.50px;font-size:13.00px;font-family:'Liberation Sans',sans-serif;font-weight:normal;color:#d6d6d6;transform:scaleX(0.8254);transform-origin:0 0;">Search</div>
<svg style="left:188px;top:689px;" width="42" height="23" viewBox="0 0 42 23"><path d="M3 7 L18 5 L24 1 L25 5 L33 6 L24 9 L10 10 Z" fill="#b8b0e0"/><ellipse cx="26" cy="17" rx="15" ry="5" fill="#e0b010"/><circle cx="16" cy="16" r="3" fill="#f0c020"/><circle cx="24" cy="14" r="3" fill="#e8b818"/><circle cx="33" cy="15" r="3.5" fill="#f0c828"/><path d="M8 20 Q25 18 41 19 V22 H8 Z" fill="#70a030"/></svg>
<svg style="left:241px;top:689px;" width="21" height="22" viewBox="0 0 21 22"><path d="M6 5 Q6 1 10.5 1 Q15 1 15 5" stroke="#2aa0e8" stroke-width="1.6" fill="none"/><rect x="1" y="5" width="19" height="16" rx="2" fill="#f4f4f4"/><rect x="6" y="9" width="4" height="4" fill="#f25022"/><rect x="11" y="9" width="4" height="4" fill="#7fba00"/><rect x="6" y="14" width="4" height="4" fill="#00a4ef"/><rect x="11" y="14" width="4" height="4" fill="#ffb900"/></svg>
<svg style="left:277px;top:689px;" width="22" height="20" viewBox="0 0 22 20"><path d="M1 3 Q1 1 3 1 H8 L10 3 H19 Q21 3 21 5 V17 Q21 19 19 19 H3 Q1 19 1 17 Z" fill="#f6c836"/><rect x="1" y="6" width="20" height="13" rx="1.5" fill="#ffd75a"/><rect x="7" y="13" width="8" height="5" rx="1" fill="#1a78d0"/></svg>
<div style="left:285.0px;top:713px;width:6px;height:3px;background:#9a9a9a;border-radius:2px"></div>
<svg style="left:314px;top:689px;" width="21" height="22" viewBox="0 0 21 22"><path d="M2 3 L19 1 V19 L2 21 Z" fill="#d01818"/><text x="3" y="13" font-size="9" font-weight="bold" font-family="Liberation Sans" fill="#fff">SW</text><text x="6" y="19" font-size="4.5" font-family="Liberation Sans" fill="#fff">2022</text></svg>
<svg style="left:350.7px;top:690px;" width="20" height="20" viewBox="0 0 20 20"><circle cx="10" cy="10" r="9.5" fill="#1b4e80"/><circle cx="13" cy="7.5" r="3.4" fill="none" stroke="#fff" stroke-width="1.6"/><path d="M1 11 L8 14 L12 9" stroke="#fff" stroke-width="2.2" fill="none"/><circle cx="7" cy="14" r="2.2" fill="#fff"/></svg>
<svg style="left:387px;top:690px;" width="22" height="18" viewBox="0 0 22 18"><path d="M4 6 Q2 6 1.5 10 Q1 16 4 16 Q6 16 8 13 H14 Q16 16 18 16 Q21 16 20.5 10 Q20 6 18 6 Z" fill="#b060e0"/><path d="M4 6 Q2 6 1.5 10 Q1 16 4 16 Q6 16 8 13 H11 V6 Z" fill="#40a8f0"/><rect x="7" y="1" width="7" height="5" fill="#8080f0"/></svg>
<svg style="left:424px;top:690px;" width="21" height="21" viewBox="0 0 21 21"><circle cx="10.5" cy="10.5" r="10" fill="#101010"/><path d="M14 6.5 Q12.5 5 10.5 5 Q5 5 5 10.5 Q5 16 10.5 16 Q16 16 16 10.5 H11" stroke="#fff" stroke-width="2.2" fill="none"/></svg>
<svg style="left:461px;top:690px;" width="21" height="21" viewBox="0 0 21 21"><circle cx="10.5" cy="10.5" r="10" fill="#5865f2"/><path d="M5 14 Q4 9 6.5 6 Q8.5 5 10.5 5.8 Q12.5 5 14.5 6 Q17 9 16 14 Q14.5 15.5 13 15 L12 13.8 Q10.5 14.3 9 13.8 L8 15 Q6.5 15.5 5 14 Z" fill="#fff"/><circle cx="8.3" cy="10.5" r="1.3" fill="#5865f2"/><circle cx="12.7" cy="10.5" r="1.3" fill="#5865f2"/></svg>
<svg style="left:497px;top:688px;" width="26" height="24" viewBox="0 0 26 24"><path d="M2 22 L3.5 16.5 Q1.5 13 2.5 9 Q4.5 3 11 3 Q18 3 20 9 Q21.5 16 15 19.5 Q10.5 21.5 6.5 19.5 Z" fill="#25d366"/><path d="M8 8 Q7 10 9 13 Q11.5 16 14 16 L15 14.5 L13 13 L12 14 Q10 13 9 11 L10 10 L9 8 Z" fill="#fff"/><circle cx="18.5" cy="5.5" r="5.5" fill="#4aa8f0"/><text x="16.3" y="8.3" font-size="7.5" font-family="Liberation Sans" fill="#fff">4</text></svg>
<svg style="left:534px;top:689px;" width="21" height="22" viewBox="0 0 21 22"><path d="M4 2 L8 1 H13 L17 2 L20 6 L18 15 Q14 20 10.5 21 Q7 20 3 15 L1 6 Z" fill="#fb542b"/><path d="M7 8 L10.5 9.5 L14 8 L13 13 L10.5 15 L8 13 Z" fill="#fff"/></svg>
<div style="left:541.6px;top:713px;width:6px;height:3px;background:#9a9a9a;border-radius:2px"></div>
<svg style="left:570px;top:689px;" width="22" height="22" viewBox="0 0 22 22"><rect x="1" y="1" width="20" height="20" fill="#c01818"/><path d="M12 3 L6 12 H10 L9 19 L15 9 H11 Z" fill="#fff"/></svg>
<svg style="left:608px;top:689px;" width="20" height="22" viewBox="0 0 20 22"><rect x="1" y="1" width="18" height="20" rx="2" fill="#e8f0f8"/><path d="M4 3 H16 L11 11 L16 19 H4 L9 11 Z" fill="#5a80c0"/><path d="M6 4 H14 L10.5 9.5 Z M6 18 H14 L10 12.5 Z" fill="#c8dcf0"/></svg>
<div style="left:615.0px;top:713px;width:6px;height:3px;background:#9a9a9a;border-radius:2px"></div>
<svg style="left:644.4px;top:690px;" width="20" height="20" viewBox="0 0 20 20"><circle cx="10" cy="10" r="9.5" fill="#1b4e80"/><circle cx="13" cy="7.5" r="3.4" fill="none" stroke="#fff" stroke-width="1.6"/><path d="M1 11 L8 14 L12 9" stroke="#fff" stroke-width="2.2" fill="none"/><circle cx="7" cy="14" r="2.2" fill="#fff"/></svg>
<div style="left:651.4px;top:713px;width:6px;height:3px;background:#9a9a9a;border-radius:2px"></div>
<svg style="left:680px;top:689px;" width="22" height="21" viewBox="0 0 22 21"><rect x="6" y="1" width="15" height="19" rx="1.5" fill="#21a366"/><rect x="6" y="7" width="15" height="6" fill="#107c41"/><rect x="1" y="5" width="11" height="11" rx="1.5" fill="#107c41"/><text x="3.5" y="14" font-size="8.5" font-weight="bold" font-family="Liberation Sans" fill="#fff">X</text></svg>
<div style="left:687.7px;top:713px;width:6px;height:3px;background:#9a9a9a;border-radius:2px"></div>
<div style="left:711.4px;top:682.5px;width:33.3px;height:33.5px;background:#2c2a2e;border-radius:4px"></div>
<svg style="left:717px;top:689px;" width="22" height="21" viewBox="0 0 22 21"><rect x="1" y="1" width="20" height="19" rx="3" fill="#d8eef8"/><rect x="3" y="4" width="16" height="13" rx="1.5" fill="#48a8d8"/><path d="M3 17 Q8 8 19 11 V17 Z" fill="#c8e8f4"/></svg>
<div style="left:721.8px;top:713.5px;width:12.8px;height:3px;background:#5cc8f8;border-radius:2px"></div>
<svg style="left:1029px;top:696px;" width="13" height="8" viewBox="0 0 13 8"><path d="M1 7 L6.5 1.5 L12 7" stroke="#f0f0f0" stroke-width="1.5" fill="none"/></svg>
<div class="t" style="left:1058.00px;top:683.89px;font-size:11.00px;font-family:'Liberation Sans',sans-serif;font-weight:normal;color:#e8e8e8;transform:scaleX(0.7971);transform-origin:0 0;">ENG</div>
<div class="t" style="left:1062.50px;top:697.69px;font-size:11.00px;font-family:'Liberation Sans',sans-serif;font-weight:normal;color:#e8e8e8;transform:scaleX(0.9091);transform-origin:0 0;">IN</div>
<svg style="left:1091px;top:692px;" width="17" height="14" viewBox="0 0 17 14"><path d="M1.5 5 Q8.5 -1 15.5 5" stroke="#f0f0f0" stroke-width="1.4" fill="none"/><path d="M4 8 Q8.5 3.5 13 8" stroke="#f0f0f0" stroke-width="1.4" fill="none"/><path d="M6.3 10.6 Q8.5 8.6 10.7 10.6" stroke="#f0f0f0" stroke-width="1.4" fill="none"/><circle cx="8.5" cy="12.5" r="1.2" fill="#f0f0f0"/></svg>
<svg style="left:1111px;top:693px;" width="16" height="14" viewBox="0 0 16 14"><path d="M1 5 H4 L8 1.5 V12.5 L4 9 H1 Z" stroke="#f0f0f0" stroke-width="1.2" fill="none"/><path d="M10 4.5 L15 9.5 M15 4.5 L10 9.5" stroke="#f0f0f0" stroke-width="1.2"/></svg>
<svg style="left:1130px;top:692px;" width="18" height="16" viewBox="0 0 18 16"><rect x="2" y="5" width="13" height="9" rx="1.5" stroke="#f0f0f0" stroke-width="1.3" fill="none"/><rect x="15.5" y="8" width="1.5" height="3" fill="#f0f0f0"/><path d="M4 1 L4 7 M2 4 L6 2" stroke="#f0f0f0" stroke-width="1.2"/><rect x="3.5" y="6.5" width="6" height="6" fill="#f0f0f0"/></svg>
<div class="t" style="left:1186.40px;top:683.32px;font-size:11.50px;font-family:'Liberation Sans',sans-serif;font-weight:normal;color:#f0f0f0;transform:scaleX(0.8339);transform-origin:0 0;">15:06</div>
<div class="t" style="left:1159.30px;top:697.02px;font-size:11.50px;font-family:'Liberation Sans',sans-serif;font-weight:normal;color:#f0f0f0;transform:scaleX(0.8703);transform-origin:0 0;">22-02-2024</div>
<svg style="left:1216px;top:692px;" width="15" height="17" viewBox="0 0 15 17"><path d="M7.5 1 Q12.5 1 12.5 7 V11 L14 13.5 H1 L2.5 11 V7 Q2.5 1 7.5 1 Z" fill="#8fd8f8"/><path d="M5.5 15 Q7.5 17 9.5 15" stroke="#8fd8f8" stroke-width="1.4" fill="none"/></svg>
<svg style="left:1243px;top:688px;" width="22" height="26" viewBox="0 0 22 26"><path d="M3 6 Q4 1 9 1 H15 Q12 3 11 8 L9 17 Q8 20 5 20 H2 Q0 19 1 16 Z" fill="#3cb4f0"/><path d="M19 20 Q18 24 13 24 H7 Q10 22 11 17 L13 8 Q14 5 17 5 H20 Q22 6 21 9 Z" fill="#c060e0"/><rect x="7" y="16" width="15" height="8" rx="2" fill="#f8c028"/><text x="8.6" y="22.8" font-size="6" font-weight="bold" font-family="Liberation Sans" fill="#333">PRE</text></svg>
</body></html>
